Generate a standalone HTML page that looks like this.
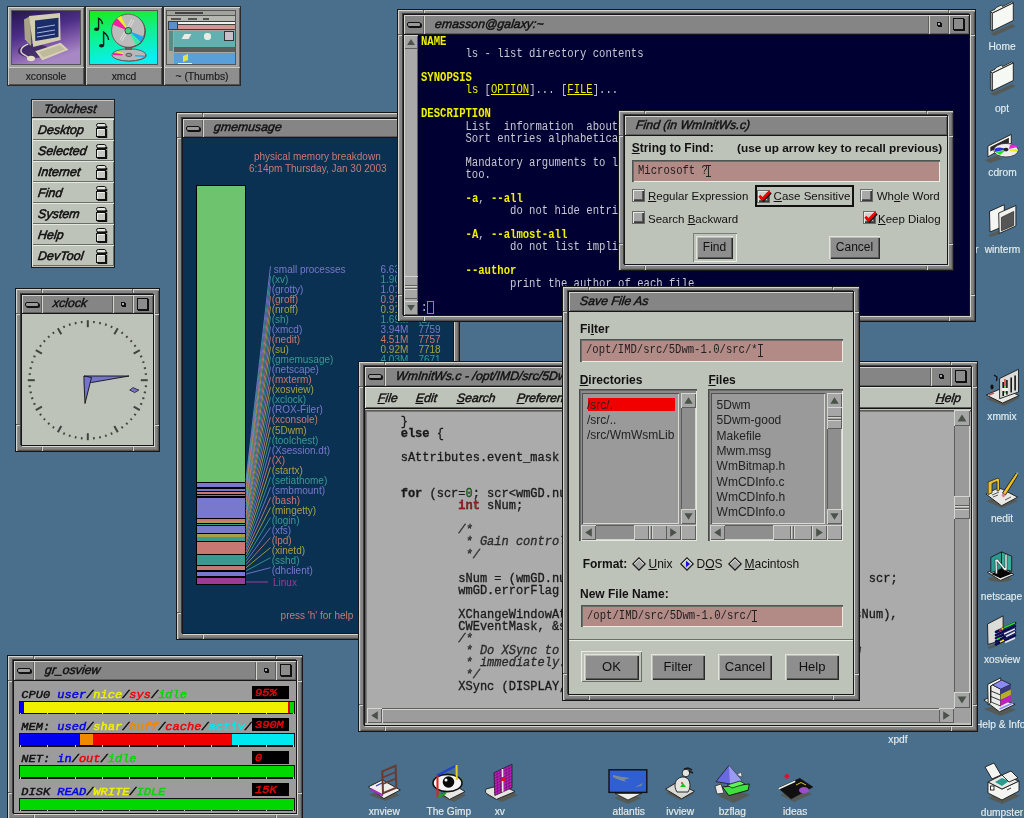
<!DOCTYPE html><html><head><meta charset="utf-8"><style>
*{box-sizing:border-box;margin:0;padding:0}
html,body{width:1024px;height:818px;overflow:hidden;background:#4a6f8c;font-family:"Liberation Sans",sans-serif;position:relative}
.a{position:absolute}
.win{position:absolute;background:#848484;border:1px solid #161616;box-shadow:inset 1px 1px 0 #d2d6ce,inset 2px 2px 0 #929292,inset -1px -1px 0 #505050,inset -2px -2px 0 #747474;}
.inn{position:absolute;border:1px solid #161616;box-shadow:1px 1px 0 #d2d6ce,-1px -1px 0 #3c3c3c;overflow:hidden}
.tb{position:absolute;left:0;top:0;right:0;height:19px;background:#858585;border-bottom:1px solid #161616}
.btn{position:absolute;top:0;bottom:0;width:20px;box-shadow:inset 1px 1px 0 #d2d6ce,inset -1px -1px 0 #5e5e5e}
.ttl{position:absolute;top:0;bottom:0;box-shadow:inset 1px 1px 0 #d2d6ce,inset -1px -1px 0 #5e5e5e;font:italic 12.3px/17px "Liberation Sans",sans-serif;-webkit-text-stroke:0.45px #111;color:#111;white-space:nowrap;overflow:hidden}
.cl{position:absolute;left:0;top:19px;right:0;bottom:0;overflow:hidden}
.mono{font-family:"Liberation Mono",monospace}
.pre{white-space:pre}
.rb{box-shadow:inset 1px 1px 0 #d2d6ce,inset -1px -1px 0 #5e5e5e}
.sk{box-shadow:inset 1px 1px 0 #5e5e5e,inset -1px -1px 0 #d2d6ce}
.lab{font:10.2px/12px "Liberation Sans",sans-serif;color:#e4ecec;text-align:center;white-space:nowrap;-webkit-text-stroke:0.15px #e4ecec}
</style></head><body><div class="a" style="left:0;top:0;width:1024px;height:818px;overflow:hidden;will-change:transform"><svg class="a" style="left:984px;top:0px" width="40" height="40"><polygon points="5.9,33.7 28.4,24 31.3,26.4 10.8,35.7" fill="#57574e" opacity="0.85"/><polygon points="6.4,11.5 8.3,13.2 8.3,30.8 6.4,29.5" fill="#d0d0c8" stroke="#1a1a1a" stroke-width="0.8"/><polygon points="6.4,11.5 11,9.2 12,7.6 17.5,5 18.5,6.6 27.9,1.8 29.3,2.9 8.3,13.2" fill="#e4e8e0" stroke="#1a1a1a" stroke-width="0.8"/><polygon points="8.3,13.2 29.3,2.9 29.3,20.5 8.3,30.8" fill="#f6f8f4" stroke="#1a1a1a" stroke-width="0.9"/></svg><div class="a lab" style="left:962px;top:41px;width:80px">Home</div><svg class="a" style="left:984px;top:60px" width="40" height="40"><polygon points="5.9,33.7 28.4,24 31.3,26.4 10.8,35.7" fill="#57574e" opacity="0.85"/><polygon points="6.4,11.5 8.3,13.2 8.3,30.8 6.4,29.5" fill="#d0d0c8" stroke="#1a1a1a" stroke-width="0.8"/><polygon points="6.4,11.5 11,9.2 12,7.6 17.5,5 18.5,6.6 27.9,1.8 29.3,2.9 8.3,13.2" fill="#e4e8e0" stroke="#1a1a1a" stroke-width="0.8"/><polygon points="8.3,13.2 29.3,2.9 29.3,20.5 8.3,30.8" fill="#f6f8f4" stroke="#1a1a1a" stroke-width="0.9"/></svg><div class="a lab" style="left:962px;top:103px;width:80px">opt</div><svg class="a" style="left:982px;top:128px" width="40" height="40"><polygon points="2.9,32.3 14.7,27.4 20,31 8,35" fill="#57574e" opacity="0.85"/><polygon points="5.9,18.1 29.3,6.4 29.3,15.2 5.9,28.9" fill="#f4f4f0" stroke="#1a1a1a" stroke-width="0.9"/><polygon points="8.3,19 26.9,9.8 26.9,15 8.3,23.5" fill="#2a2a2a"/><ellipse cx="24" cy="22.2" rx="12.2" ry="6.8" fill="#ecece8" stroke="#3a2a3a" stroke-width="0.8"/><path d="M12.5 21 Q18 18 24 21.5 L13 24 Z" fill="#3030e0"/><path d="M13.5 24 L24 22 L18 27 Z" fill="#20e020"/><path d="M28 17 Q33 15.5 35.5 19 L27 21 Z" fill="#f020e0"/><path d="M27 21.5 L36 21 L35 24 L28 23 Z" fill="#f0f020"/><ellipse cx="24" cy="21.6" rx="2.6" ry="1.8" fill="#222"/></svg><div class="a lab" style="left:962.5px;top:167px;width:80px">cdrom</div><svg class="a" style="left:982px;top:198px" width="40" height="42"><polygon points="6,37 16,33 18,36 8,39" fill="#57574e" opacity="0.85"/><polygon points="7.5,13.4 22.3,6.7 22.3,28 8,34" fill="#f4f6f2" stroke="#1a1a1a" stroke-width="0.9"/><polygon points="16.7,15 33.9,7.5 33.9,28 17.2,35.5" fill="#f0f0ec" stroke="#1a1a1a" stroke-width="0.9"/><polygon points="19.4,19.4 31.7,13.4 31.7,27.4 19.4,32.8" fill="#555555" stroke="#222" stroke-width="0.7"/></svg><div class="a lab" style="left:975px;top:244px;width:10px;text-align:left">r</div><div class="a lab" style="left:962.5px;top:244px;width:80px">winterm</div><svg class="a" style="left:980px;top:362px" width="44" height="46"><polygon points="6,37 24,44 40,36 22,30" fill="#57574e" opacity="0.85"/><polygon points="6.1,33 22.6,26 39.1,33.6 22.6,41" fill="#e8e8e4" stroke="#1a1a1a" stroke-width="0.9"/><path d="M9 33 L14 31" stroke="#c06060" stroke-width="1.6"/><polygon points="19.6,16.5 38.5,7.3 38.5,30 19.6,36.7" fill="#dcdcd8" stroke="#1a1a1a" stroke-width="0.9"/><path d="M23.2 20 V34 M26.9 18 V32.5 M31.2 15.5 V30.5 M35.1 13.5 V28.5" stroke="#151515" stroke-width="1.6"/><path d="M25 17 V24" stroke="#e01010" stroke-width="1.2"/><path d="M25 24 V31" stroke="#10c010" stroke-width="1.2"/><rect x="22" y="26" width="6" height="3" fill="#f0f0f0"/><path d="M14 13 L17 15 L16.5 19" stroke="#111" stroke-width="1.3" fill="none"/><ellipse cx="12" cy="25" rx="1.6" ry="2.4" fill="#111"/></svg><div class="a lab" style="left:962px;top:410.5px;width:80px">xmmix</div><svg class="a" style="left:980px;top:466px" width="44" height="44"><polygon points="6,35 22,42 38,35 22,29" fill="#57574e" opacity="0.85"/><polygon points="5.9,28 18,22 22,23 37.6,31.2 21.5,39.8" fill="#e8e8e4" stroke="#1a1a1a" stroke-width="0.9"/><path d="M12 29 L19 26 M13 31 L18 29 M25 34 L31 31" stroke="#333" stroke-width="0.8"/><path d="M8 16 L18 12 L19.5 13.5 L19.5 24 L17 25 L17 15.5 L12 17.5 L12 27 L8 28.5 Z" fill="#e8c030" stroke="#2a2a10" stroke-width="0.8"/><path d="M8 17 L8 28" stroke="#7a7020" stroke-width="1.5"/><polygon points="36,7 38,9 25.5,29 22.5,27" fill="#f0c020" stroke="#1a1a1a" stroke-width="0.9"/><polygon points="22.5,27 25.5,29 24,31.5 21.5,30" fill="#e08080"/><polygon points="36,7 38,9 37.5,6.5" fill="#d8d8a0"/></svg><div class="a lab" style="left:962px;top:513px;width:80px">nedit</div><svg class="a" style="left:980px;top:546px" width="40" height="40"><ellipse cx="20" cy="33" rx="12" ry="3" fill="#57574e" opacity="0.85"/><polygon points="7.5,26.3 21.5,20 33.9,28.5 20.4,34.4" fill="#e8e8e4" stroke="#1a1a1a" stroke-width="0.9"/><polygon points="10.8,11.3 21.5,5.9 21.5,22.6 10.8,26.9" fill="#2a9a90" stroke="#1a1a1a" stroke-width="0.9"/><polygon points="21.5,5.9 31.7,10.2 31.7,25.3 21.5,22.6" fill="#3aaa9a" stroke="#1a1a1a" stroke-width="0.9"/><polygon points="11.3,28 21.5,22.6 32.3,27.4 20.4,32.3" fill="#050505"/><path d="M15 13.5 L17.5 13 L25 22 L25 8.5 L27 8 L27 24 L24.5 24.5 L17 15.5 L17.5 27.5 L15.5 28 Z" fill="#f8f8f8" stroke="#111" stroke-width="0.5"/></svg><div class="a lab" style="left:961.5px;top:591px;width:80px">netscape</div><svg class="a" style="left:980px;top:610px" width="40" height="42"><polygon points="7,37 16,34 18,36 9,39" fill="#57574e" opacity="0.85"/><polygon points="7.5,14 23.1,5.9 23.1,30 8,34.4" fill="#dcdcd8" stroke="#1a1a1a" stroke-width="0.9"/><path d="M16 22.0 L35 13.0" stroke="#0a0a50" stroke-width="2.6" stroke-linecap="round"/><path d="M16 25.1 L35 16.1" stroke="#0a0a50" stroke-width="2.6" stroke-linecap="round"/><path d="M16 28.2 L35 19.2" stroke="#0a0a50" stroke-width="2.6" stroke-linecap="round"/><path d="M16 31.3 L35 22.3" stroke="#0a0a50" stroke-width="2.6" stroke-linecap="round"/><path d="M16 34.4 L35 25.4" stroke="#0a0a50" stroke-width="2.6" stroke-linecap="round"/><path d="M24 17.8 L35 12.8" stroke="#20e020" stroke-width="1.6"/><path d="M19 20.5 L21 19.5" stroke="#f02020" stroke-width="1.6"/><path d="M21.5 19.3 L23.5 18.3" stroke="#f0e020" stroke-width="1.6"/><path d="M24 24 L35 18.8" stroke="#e8e8e8" stroke-width="1.4"/><path d="M26 26.5 L35 22" stroke="#e8e8e8" stroke-width="1.4"/><path d="M17 29.5 L20 28" stroke="#20e020" stroke-width="1.6"/><path d="M20 32 L24 30" stroke="#f0e020" stroke-width="1.6"/><path d="M25 32.5 L35 28" stroke="#e8e8e8" stroke-width="1.4"/></svg><div class="a lab" style="left:962px;top:654px;width:80px">xosview</div><svg class="a" style="left:978px;top:672px" width="44" height="44"><polygon points="6,37 22,44 38,38 22,32" fill="#57574e" opacity="0.85"/><polygon points="5.9,28 14,24 37.1,32.3 21.5,39.8" fill="#eeeeea" stroke="#1a1a1a" stroke-width="0.9"/><path d="M21.5 37 L35 31" stroke="#8a8af0" stroke-width="1.5"/><polygon points="9.7,12.4 22.6,5.9 23,9 12.5,14 12.5,31 10.2,32.8" fill="#f4f4f0" stroke="#1a1a1a" stroke-width="0.9"/><polygon points="13,14 14.5,12.9 22.6,17.2 22.6,34 13,30" fill="#eaeaea" stroke="#1a1a1a" stroke-width="0.8"/><path d="M13 19 L22.6 23 M13 24.5 L22.6 28.5" stroke="#1a1a1a" stroke-width="0.9"/><polygon points="14.5,12.9 23.7,8 32.8,12.4 22.6,17.2" fill="#8a8af0" stroke="#1a1a1a" stroke-width="0.8"/><polygon points="22.6,17.2 32.8,12.4 32.8,17.5 22.6,22.5" fill="#3a3a80"/><polygon points="22.6,22.5 32.8,17.5 32.8,23 22.6,28" fill="#b8b020"/><polygon points="22.6,28 32.8,23 32.8,29 22.6,34" fill="#c020c0"/></svg><div class="a lab" style="left:975px;top:719px;width:60px;text-align:left">Help &amp; Info</div><svg class="a" style="left:980px;top:760px" width="44" height="46"><polygon points="8,38 22,44 40,36 26,30" fill="#57574e" opacity="0.85"/><polygon points="8,22 22,29 39,21 39,31 22,40 8,33" fill="#f4f4f0" stroke="#1a1a1a" stroke-width="0.9"/><polygon points="8,22 22,15 39,21 22,29" fill="#e8e8e4" stroke="#1a1a1a" stroke-width="0.9"/><polygon points="15,22 22,18 29,21 22,26" fill="#2a9a90"/><polygon points="5,7 14,3 21,15 12,19" fill="#f4f4f0" stroke="#1a1a1a" stroke-width="0.9"/><polygon points="22,15 31,11 38,18 29,22" fill="#f0f0ec" stroke="#1a1a1a" stroke-width="0.9"/><rect x="10.5" y="26" width="3.5" height="4" fill="#fff" stroke="#1a1a1a" stroke-width="0.9"/><path d="M27 30 L31 28" stroke="#1a1a1a" stroke-width="0.9"/></svg><div class="a lab" style="left:962px;top:807px;width:80px">dumpster</div><svg class="a" style="left:362px;top:758px" width="160" height="48"><polygon points="7,36.7 23,43 38,37 22,31" fill="#57574e" opacity="0.85"/><polygon points="6.25,28.9 20.3,21.9 38.3,32 21.9,40.6" fill="#eeeeea" stroke="#1a1a1a" stroke-width="0.9"/><path d="M8.5 31 L21 37.5" stroke="#a030c0" stroke-width="2.2"/><path d="M14 28 L20 25" stroke="#3030d0" stroke-width="1.2"/><polygon points="20.3,13.3 33.6,7.8 34.4,29.7 21,35.2" fill="none" stroke="#6a3a30" stroke-width="2"/><path d="M20.5 19.5 L34 14 M20.8 26 L34.2 20.5" stroke="#6a3a30" stroke-width="1.8"/><polygon points="78,38 92,44 104,37 90,31" fill="#57574e" opacity="0.85"/><polygon points="79.7,36 95.3,28.9 103,33.6 87.5,41.4" fill="#e8e8e4" stroke="#1a1a1a" stroke-width="0.9"/><ellipse cx="85.5" cy="25" rx="14.5" ry="8.6" fill="#f4f4f4" stroke="#111" stroke-width="1.6"/><circle cx="86.5" cy="24" r="5.8" fill="#0a0a0a"/><circle cx="84" cy="22" r="1.5" fill="#fff"/><path d="M75.5 18 L75.5 39.5" stroke="#e02020" stroke-width="2"/><path d="M75 17.5 L94.5 7.5" stroke="#2040d0" stroke-width="2"/><path d="M94.5 7 L94.8 22" stroke="#e0d020" stroke-width="2"/><path d="M76 39 L84 35" stroke="#20a020" stroke-width="2"/><polygon points="126,38 140,44 156,37 142,31" fill="#57574e" opacity="0.85"/><path d="M124 31 Q122 35 127 37 L134.4 41.4 L153 33.6 L140 27 Z" fill="#e4e4e0" stroke="#1a1a1a" stroke-width="0.9"/><polygon points="132,14.8 150,6.25 150,29.7 132.8,37.5" fill="#c020c0" stroke="#1a1a1a" stroke-width="0.8"/><path d="M135.0 13.4 L135.7 36.2" stroke="#5a105a" stroke-width="0.6"/><path d="M138.0 11.9 L138.5 34.9" stroke="#5a105a" stroke-width="0.6"/><path d="M141.0 10.5 L141.4 33.6" stroke="#5a105a" stroke-width="0.6"/><path d="M144.0 9.1 L144.3 32.3" stroke="#5a105a" stroke-width="0.6"/><path d="M147.0 7.7 L147.2 31.0" stroke="#5a105a" stroke-width="0.6"/><path d="M132 17.7 L150 9.2" stroke="#5a105a" stroke-width="0.6"/><path d="M132 20.5 L150 12.1" stroke="#5a105a" stroke-width="0.6"/><path d="M132 23.4 L150 15.0" stroke="#5a105a" stroke-width="0.6"/><path d="M132 26.2 L150 18.0" stroke="#5a105a" stroke-width="0.6"/><path d="M132 29.1 L150 20.9" stroke="#5a105a" stroke-width="0.6"/><path d="M132 31.9 L150 23.8" stroke="#5a105a" stroke-width="0.6"/><path d="M132 34.8 L150 26.8" stroke="#5a105a" stroke-width="0.6"/><path d="M140.5 11 L140.8 33.8" stroke="#e8e8e8" stroke-width="1.6"/><rect x="139" y="19" width="4" height="4" fill="#e01010"/></svg><div class="a lab" style="left:344.3px;top:806px;width:80px">xnview</div><div class="a lab" style="left:408.8px;top:806px;width:80px">The Gimp</div><div class="a lab" style="left:459.8px;top:806px;width:80px">xv</div><svg class="a" style="left:600px;top:758px" width="220" height="48"><polygon points="14,40 28,46 42,40 28,35" fill="#57574e" opacity="0.85"/><polygon points="15,35.4 41.9,35.4 28,42" fill="#eeeeea" stroke="#1a1a1a" stroke-width="0.8"/><rect x="9" y="11.8" width="37.8" height="22.6" fill="#2f5fd0" stroke="#111" stroke-width="1.4"/><path d="M13 17 Q20 19 30 20 L24 22 L27 24 Q18 22 13 19 Z" fill="#7a8a9a"/><path d="M35 29 L43 25 L41 28 Z" fill="#7a8a9a"/><polygon points="66,35 80,42 94,36 80,30" fill="#57574e" opacity="0.85"/><polygon points="65.5,31.1 76.3,24.7 94.5,33.3 81.6,40.8" fill="#d8d8d4" stroke="#1a1a1a" stroke-width="0.9"/><path d="M77 34 C73 28 75 20 82 19 C90 18 92 28 88 34 Z" fill="#e4e4e0" stroke="#1a1a1a" stroke-width="0.9"/><circle cx="85.9" cy="15" r="3.8" fill="#e4e4e0" stroke="#1a1a1a" stroke-width="0.9"/><path d="M84 11 L88 10 L92 12 M89 13 L93 15" stroke="#1a1a1a" stroke-width="1.4" fill="none"/><polygon points="80,29 83,25 86,29" fill="#20c020"/><circle cx="82" cy="25" r="0.9" fill="#e02020"/><polygon points="118,38 134,45 150,37 134,31" fill="#57574e" opacity="0.85"/><polygon points="115,28 121,26 124,35 117,36" fill="#e8e8e4" stroke="#1a1a1a" stroke-width="0.7"/><polygon points="116,23.6 128.9,7.5 141.8,22.6 130,26" fill="#6a6ae0" stroke="#1a1a1a" stroke-width="0.8"/><polygon points="128.9,7.5 141.8,22.6 130,26" fill="#9a9af0"/><polygon points="122.4,29 149.3,26 148.2,32.2 128.9,37.6" fill="#40e040" stroke="#111" stroke-width="0.9"/><polygon points="127,27 140,23 145,26 132,30" fill="#60f060" stroke="#111" stroke-width="0.7"/><polygon points="137,17 141,14 142,19" fill="#f0f0f0" stroke="#333" stroke-width="0.5"/><polygon points="180,37 194,44 212,36 198,30" fill="#57574e" opacity="0.85"/><circle cx="186.9" cy="18.3" r="2.4" fill="#e01030"/><polygon points="178.3,30 199.8,20.4 212.7,29 191.2,40.8" fill="#101010" stroke="#111" stroke-width="0.8"/><polygon points="178.3,30 195,22.5 195.5,24 179,31.5" fill="#f0f0ec"/><ellipse cx="204" cy="32.2" rx="5" ry="3.2" fill="#9a50c0"/><path d="M196 27 L201 24.5 L206 27" stroke="#d8c030" stroke-width="1" fill="none"/></svg><div class="a lab" style="left:588.7px;top:806px;width:80px">atlantis</div><div class="a lab" style="left:640.2px;top:806px;width:80px">ivview</div><div class="a lab" style="left:692.3px;top:806px;width:80px">bzflag</div><div class="a lab" style="left:755.2px;top:806px;width:80px">ideas</div><div class="a lab" style="left:878px;top:734px;width:40px">xpdf</div><div class="a" style="left:7px;top:6px;width:78px;height:80px;border:1px solid #2a2a2a;background:#a2a2a2;box-shadow:inset 1px 1px 0 #d2d6ce,inset -1px -1px 0 #606060"></div><div class="a" style="left:8px;top:67px;width:76px;height:18px;background:#8e8e8e;box-shadow:inset 1px 1px 0 #c8c8c0,inset -1px -1px 0 #505050;font:10.3px/19px 'Liberation Sans',sans-serif;color:#1a1a1a;-webkit-text-stroke:0.15px #1a1a1a;text-align:center">xconsole</div><div class="a" style="left:85px;top:6px;width:78px;height:80px;border:1px solid #2a2a2a;background:#a2a2a2;box-shadow:inset 1px 1px 0 #d2d6ce,inset -1px -1px 0 #606060"></div><div class="a" style="left:86px;top:67px;width:76px;height:18px;background:#8e8e8e;box-shadow:inset 1px 1px 0 #c8c8c0,inset -1px -1px 0 #505050;font:10.3px/19px 'Liberation Sans',sans-serif;color:#1a1a1a;-webkit-text-stroke:0.15px #1a1a1a;text-align:center">xmcd</div><div class="a" style="left:163px;top:6px;width:78px;height:80px;border:1px solid #2a2a2a;background:#a2a2a2;box-shadow:inset 1px 1px 0 #d2d6ce,inset -1px -1px 0 #606060"></div><div class="a" style="left:164px;top:67px;width:76px;height:18px;background:#8e8e8e;box-shadow:inset 1px 1px 0 #c8c8c0,inset -1px -1px 0 #505050;font:10.3px/19px 'Liberation Sans',sans-serif;color:#1a1a1a;-webkit-text-stroke:0.15px #1a1a1a;text-align:center">~ (Thumbs)</div><div class="a" style="left:11px;top:10px;width:70px;height:55px;border:1px solid #555;overflow:hidden;background:#3a2a6a">
<svg class="a" style="left:0;top:0" width="68" height="53" viewBox="0 0 68 53">
<defs><linearGradient id="xcbg" x1="0" y1="0" x2="0.4" y2="1"><stop offset="0" stop-color="#24164e"/><stop offset="0.45" stop-color="#4c2e86"/><stop offset="0.8" stop-color="#8a64b0"/><stop offset="1" stop-color="#a888c4"/></linearGradient></defs>
<rect x="0" y="0" width="68" height="53" fill="url(#xcbg)"/>
<ellipse cx="22" cy="40" rx="16" ry="7" fill="#2a1a50" opacity="0.7"/>
<polygon points="12,8.5 18.4,5 19.1,35.3 12.8,28.2" fill="#a8a488"/>
<polygon points="17,5 48,1.9 48.6,29 21.2,36" fill="#d4ceb0"/>
<polygon points="23,9.6 46.5,6.8 46.5,26.1 23.3,30" fill="#1c2c68"/>
<path d="M25 17 L43 14 M25 22 L43 19 M25 26 L43 23" stroke="#b8c8f0" stroke-width="1" opacity="0.9"/>
<polygon points="23.3,40.2 48.6,31.8 56.4,38.8 30.3,49.3" fill="#d8d2b4"/>
<polygon points="27,41 48,34 53,38.5 31,46.5" fill="#c0ba9c"/>
<path d="M16.3 33.2 C8 36 7 41 12 43.7 L16 46" stroke="#e0dac0" stroke-width="1.4" fill="none"/>
<ellipse cx="19" cy="47.5" rx="4" ry="2.8" fill="#e4dec4"/>
</svg></div><div class="a" style="left:89px;top:10px;width:69px;height:55px;border:1px solid #555;overflow:hidden">
<svg class="a" style="left:0;top:0" width="67" height="53" viewBox="0 0 67 53">
<defs><linearGradient id="mcbg" x1="0" y1="0" x2="0.2" y2="1"><stop offset="0" stop-color="#18ec18"/><stop offset="0.5" stop-color="#10f090"/><stop offset="1" stop-color="#08f0f0"/></linearGradient></defs>
<rect x="0" y="0" width="67" height="53" fill="url(#mcbg)"/>
<ellipse cx="39.5" cy="44.5" rx="17" ry="6.1" fill="#5a4a4a"/>
<ellipse cx="38.9" cy="43.9" rx="17" ry="6.1" fill="#b8b8b8" stroke="#5a4a4a" stroke-width="0.8"/>
<path d="M22.5 42 L33 43 L32 44.5 L23 44 Z" fill="#f020a0"/><path d="M27 40.5 L34 42 L33 43 L26 41.5 Z" fill="#f0f020"/>
<path d="M45 44 L55 44.5 L54 46 L45 45.5 Z" fill="#20b0f0"/>
<ellipse cx="38.9" cy="43.9" rx="3" ry="1.6" fill="#9a9a9a" stroke="#444" stroke-width="0.8"/>
<rect x="35" y="35" width="7" height="4" fill="#6a5a5a"/>
<circle cx="39.2" cy="20.5" r="16.6" fill="#5a4a4a"/>
<circle cx="38.2" cy="19.7" r="16.6" fill="#bcbcbc" stroke="#5a4a4a" stroke-width="0.8"/>
<path d="M38.2 19.7 L22.6 13.6 A16.6 16.6 0 0 1 27.2 7.2 Z" fill="#f020a0"/>
<path d="M38.2 19.7 L27.2 7.2 A16.6 16.6 0 0 1 31 5 Z" fill="#f0f020"/>
<path d="M38.2 19.7 L53.8 25.8 A16.6 16.6 0 0 1 50.5 31 Z" fill="#20a8f0"/>
<path d="M38.2 19.7 L50.5 31 A16.6 16.6 0 0 1 46 34 Z" fill="#30f0a0"/>
<path d="M32 30 L44 9 M30 29 L42 8" stroke="#e8e8e8" stroke-width="0.8"/>
<circle cx="38.2" cy="19.7" r="3.3" fill="#40d080" stroke="#444" stroke-width="1"/>
<path d="M8.6 18 L8.6 7.4 Q12 9 12.5 13.2" stroke="#181818" stroke-width="1.4" fill="none"/><ellipse cx="6.6" cy="18.3" rx="2.6" ry="1.8" fill="#181818"/>
<path d="M13.6 34.5 L13.6 21.1 Q18 24 18.7 29" stroke="#181818" stroke-width="1.4" fill="none"/><ellipse cx="11.5" cy="34.8" rx="2.6" ry="1.8" fill="#181818"/>
</svg></div><div class="a" style="left:166px;top:10px;width:70px;height:55px;border:1px solid #555;overflow:hidden;background:#a4a8a0">
<div class="a" style="left:0;top:0;width:68px;height:4px;background:#a0a49c"></div>
<div class="a" style="left:8px;top:1px;width:28px;height:2px;background:#444"></div>
<div class="a" style="left:0;top:4px;width:68px;height:1px;background:#555"></div>
<div class="a" style="left:0;top:5px;width:68px;height:5px;background:#b4b8b0"></div>
<div class="a" style="left:4px;top:7px;width:10px;height:2px;background:#555"></div><div class="a" style="left:21px;top:7px;width:9px;height:2px;background:#555"></div><div class="a" style="left:36px;top:7px;width:6px;height:2px;background:#555"></div>
<div class="a" style="left:1px;top:10px;width:67px;height:9px;background:#3a3e3a"></div>
<div class="a" style="left:2px;top:11px;width:8px;height:7px;background:#5a90c8"></div>
<div class="a" style="left:11px;top:11px;width:57px;height:2px;background:#f0f0f0"></div>
<div class="a" style="left:11px;top:14px;width:57px;height:4px;background:#d09890"></div>
<div class="a" style="left:2px;top:20px;width:4px;height:20px;background:#5a8a8a"></div>
<div class="a" style="left:7px;top:20px;width:61px;height:16px;background:#62b0b0"></div>
<div class="a" style="left:16px;top:23px;width:7px;height:5px;background:#e8ece4;transform:skewX(-30deg)"></div>
<div class="a" style="left:37px;top:22px;width:7px;height:7px;background:#e8ece4;border-radius:3px"></div>
<div class="a" style="left:57px;top:20px;width:10px;height:10px;background:#c8c0c8;border:1px solid #333"></div>
<div class="a" style="left:7px;top:36px;width:61px;height:5px;background:#5a5e5a"></div>
<div class="a" style="left:7px;top:42px;width:61px;height:12px;background:#5aa0d8"></div>
<div class="a" style="left:16px;top:44px;width:5px;height:6px;background:#e8e040;transform:skewY(-20deg)"></div>
<div class="a" style="left:11px;top:52px;width:14px;height:2px;background:#f0f0f0"></div>
</div><div class="a" style="left:31px;top:99px;width:84px;height:169px;background:#bec3b9;border:1px solid #1e1e1e"></div><div class="a" style="left:32px;top:100px;width:82px;height:18px;background:#8a8a8a;box-shadow:inset 1px 1px 0 #c8c8c0;border-bottom:1px solid #1e1e1e;font:italic 12.4px/18px 'Liberation Sans',sans-serif;-webkit-text-stroke:0.45px #111;color:#111;padding-left:12px"><span style="display:inline-block;transform:skewX(-7deg)">Toolchest</span></div><div class="a" style="left:32px;top:119px;width:82px;height:21px;background:#bec3b9;box-shadow:inset 1px 1px 0 #e4e8e0,inset -1px -1px 0 #6a6e68;font:italic 12.5px/23px 'Liberation Sans',sans-serif;-webkit-text-stroke:0.55px #111;color:#111;padding-left:6px"><span style="display:inline-block;transform:skewX(-7deg)">Desktop</span><svg class="a" style="left:64px;top:4px" width="13" height="15"><rect x="0.5" y="0.5" width="9.5" height="3.5" rx="1.8" fill="#e4e8e0" stroke="#111" stroke-width="1"/><path d="M1 4.5 H10.5 V3" stroke="#111" stroke-width="1.6" fill="none"/><rect x="0.5" y="5.5" width="9" height="8" fill="#c4c8c0" stroke="#111" stroke-width="1"/><path d="M10.5 6 V14.5 H1.5" stroke="#111" stroke-width="1.4" fill="none"/><path d="M1.5 6.5 H8.5 M1.5 6.5 V12.5" stroke="#eef2ea" stroke-width="1"/></svg></div><div class="a" style="left:32px;top:140px;width:82px;height:21px;background:#bec3b9;box-shadow:inset 1px 1px 0 #e4e8e0,inset -1px -1px 0 #6a6e68;font:italic 12.5px/23px 'Liberation Sans',sans-serif;-webkit-text-stroke:0.55px #111;color:#111;padding-left:6px"><span style="display:inline-block;transform:skewX(-7deg)">Selected</span><svg class="a" style="left:64px;top:4px" width="13" height="15"><rect x="0.5" y="0.5" width="9.5" height="3.5" rx="1.8" fill="#e4e8e0" stroke="#111" stroke-width="1"/><path d="M1 4.5 H10.5 V3" stroke="#111" stroke-width="1.6" fill="none"/><rect x="0.5" y="5.5" width="9" height="8" fill="#c4c8c0" stroke="#111" stroke-width="1"/><path d="M10.5 6 V14.5 H1.5" stroke="#111" stroke-width="1.4" fill="none"/><path d="M1.5 6.5 H8.5 M1.5 6.5 V12.5" stroke="#eef2ea" stroke-width="1"/></svg></div><div class="a" style="left:32px;top:161px;width:82px;height:21px;background:#bec3b9;box-shadow:inset 1px 1px 0 #e4e8e0,inset -1px -1px 0 #6a6e68;font:italic 12.5px/23px 'Liberation Sans',sans-serif;-webkit-text-stroke:0.55px #111;color:#111;padding-left:6px"><span style="display:inline-block;transform:skewX(-7deg)">Internet</span><svg class="a" style="left:64px;top:4px" width="13" height="15"><rect x="0.5" y="0.5" width="9.5" height="3.5" rx="1.8" fill="#e4e8e0" stroke="#111" stroke-width="1"/><path d="M1 4.5 H10.5 V3" stroke="#111" stroke-width="1.6" fill="none"/><rect x="0.5" y="5.5" width="9" height="8" fill="#c4c8c0" stroke="#111" stroke-width="1"/><path d="M10.5 6 V14.5 H1.5" stroke="#111" stroke-width="1.4" fill="none"/><path d="M1.5 6.5 H8.5 M1.5 6.5 V12.5" stroke="#eef2ea" stroke-width="1"/></svg></div><div class="a" style="left:32px;top:182px;width:82px;height:21px;background:#bec3b9;box-shadow:inset 1px 1px 0 #e4e8e0,inset -1px -1px 0 #6a6e68;font:italic 12.5px/23px 'Liberation Sans',sans-serif;-webkit-text-stroke:0.55px #111;color:#111;padding-left:6px"><span style="display:inline-block;transform:skewX(-7deg)">Find</span><svg class="a" style="left:64px;top:4px" width="13" height="15"><rect x="0.5" y="0.5" width="9.5" height="3.5" rx="1.8" fill="#e4e8e0" stroke="#111" stroke-width="1"/><path d="M1 4.5 H10.5 V3" stroke="#111" stroke-width="1.6" fill="none"/><rect x="0.5" y="5.5" width="9" height="8" fill="#c4c8c0" stroke="#111" stroke-width="1"/><path d="M10.5 6 V14.5 H1.5" stroke="#111" stroke-width="1.4" fill="none"/><path d="M1.5 6.5 H8.5 M1.5 6.5 V12.5" stroke="#eef2ea" stroke-width="1"/></svg></div><div class="a" style="left:32px;top:203px;width:82px;height:21px;background:#bec3b9;box-shadow:inset 1px 1px 0 #e4e8e0,inset -1px -1px 0 #6a6e68;font:italic 12.5px/23px 'Liberation Sans',sans-serif;-webkit-text-stroke:0.55px #111;color:#111;padding-left:6px"><span style="display:inline-block;transform:skewX(-7deg)">System</span><svg class="a" style="left:64px;top:4px" width="13" height="15"><rect x="0.5" y="0.5" width="9.5" height="3.5" rx="1.8" fill="#e4e8e0" stroke="#111" stroke-width="1"/><path d="M1 4.5 H10.5 V3" stroke="#111" stroke-width="1.6" fill="none"/><rect x="0.5" y="5.5" width="9" height="8" fill="#c4c8c0" stroke="#111" stroke-width="1"/><path d="M10.5 6 V14.5 H1.5" stroke="#111" stroke-width="1.4" fill="none"/><path d="M1.5 6.5 H8.5 M1.5 6.5 V12.5" stroke="#eef2ea" stroke-width="1"/></svg></div><div class="a" style="left:32px;top:224px;width:82px;height:21px;background:#bec3b9;box-shadow:inset 1px 1px 0 #e4e8e0,inset -1px -1px 0 #6a6e68;font:italic 12.5px/23px 'Liberation Sans',sans-serif;-webkit-text-stroke:0.55px #111;color:#111;padding-left:6px"><span style="display:inline-block;transform:skewX(-7deg)">Help</span><svg class="a" style="left:64px;top:4px" width="13" height="15"><rect x="0.5" y="0.5" width="9.5" height="3.5" rx="1.8" fill="#e4e8e0" stroke="#111" stroke-width="1"/><path d="M1 4.5 H10.5 V3" stroke="#111" stroke-width="1.6" fill="none"/><rect x="0.5" y="5.5" width="9" height="8" fill="#c4c8c0" stroke="#111" stroke-width="1"/><path d="M10.5 6 V14.5 H1.5" stroke="#111" stroke-width="1.4" fill="none"/><path d="M1.5 6.5 H8.5 M1.5 6.5 V12.5" stroke="#eef2ea" stroke-width="1"/></svg></div><div class="a" style="left:32px;top:245px;width:82px;height:21px;background:#bec3b9;box-shadow:inset 1px 1px 0 #e4e8e0,inset -1px -1px 0 #6a6e68;font:italic 12.5px/23px 'Liberation Sans',sans-serif;-webkit-text-stroke:0.55px #111;color:#111;padding-left:6px"><span style="display:inline-block;transform:skewX(-7deg)">DevTool</span><svg class="a" style="left:64px;top:4px" width="13" height="15"><rect x="0.5" y="0.5" width="9.5" height="3.5" rx="1.8" fill="#e4e8e0" stroke="#111" stroke-width="1"/><path d="M1 4.5 H10.5 V3" stroke="#111" stroke-width="1.6" fill="none"/><rect x="0.5" y="5.5" width="9" height="8" fill="#c4c8c0" stroke="#111" stroke-width="1"/><path d="M10.5 6 V14.5 H1.5" stroke="#111" stroke-width="1.4" fill="none"/><path d="M1.5 6.5 H8.5 M1.5 6.5 V12.5" stroke="#eef2ea" stroke-width="1"/></svg></div><div class="win" style="left:15px;top:288px;width:145px;height:164px"><div class="a" style="left:25px;top:0;width:1px;height:5px;background:#5e5e5e"></div><div class="a" style="left:26px;top:0;width:1px;height:5px;background:#d2d6ce"></div><div class="a" style="left:25px;top:157px;width:1px;height:5px;background:#5e5e5e"></div><div class="a" style="left:26px;top:157px;width:1px;height:5px;background:#d2d6ce"></div><div class="a" style="left:116px;top:0;width:1px;height:5px;background:#5e5e5e"></div><div class="a" style="left:117px;top:0;width:1px;height:5px;background:#d2d6ce"></div><div class="a" style="left:116px;top:157px;width:1px;height:5px;background:#5e5e5e"></div><div class="a" style="left:117px;top:157px;width:1px;height:5px;background:#d2d6ce"></div><div class="a" style="top:24px;left:0;height:1px;width:5px;background:#5e5e5e"></div><div class="a" style="top:25px;left:0;height:1px;width:5px;background:#d2d6ce"></div><div class="a" style="top:24px;left:138px;height:1px;width:5px;background:#5e5e5e"></div><div class="a" style="top:25px;left:138px;height:1px;width:5px;background:#d2d6ce"></div><div class="a" style="top:135px;left:0;height:1px;width:5px;background:#5e5e5e"></div><div class="a" style="top:136px;left:0;height:1px;width:5px;background:#d2d6ce"></div><div class="a" style="top:135px;left:138px;height:1px;width:5px;background:#5e5e5e"></div><div class="a" style="top:136px;left:138px;height:1px;width:5px;background:#d2d6ce"></div><div class="inn" style="left:5px;top:5px;width:133px;height:152px;background:#bec3b9"><div class="tb" style="height:19px"><div class="btn" style="left:0"><div class="a" style="left:3px;top:7px;width:14px;height:5px;border:1px solid #111;border-radius:2px;box-shadow:1px 1px 0 #111;background:#9a9a9a"></div></div><div class="ttl" style="left:20px;width:71px;padding-left:11px;line-height:17px"><span style="display:inline-block;transform:skewX(-7deg)">xclock</span></div><div class="btn" style="left:91px"><div class="a" style="left:8px;top:7px;width:4px;height:4px;border:1px solid #111;box-shadow:1px 1px 0 #111;background:#aaa"></div></div><div class="btn" style="left:111px"><div class="a" style="left:4px;top:3px;width:11px;height:12px;border:1px solid #111;box-shadow:1px 1px 0 #111;background:#8c8c8c"></div></div></div><div class="cl" style="top:19px"><svg class="a" style="left:0;top:0" width="131" height="132" viewBox="0 0 131 132"><line x1="65.8" y1="13.2" x2="65.8" y2="6.2" stroke="#404440" stroke-width="2.0"/><line x1="71.8" y1="9.2" x2="72.0" y2="7.0" stroke="#404440" stroke-width="1.7"/><line x1="77.7" y1="10.2" x2="78.2" y2="8.0" stroke="#404440" stroke-width="1.7"/><line x1="83.5" y1="11.7" x2="84.2" y2="9.6" stroke="#404440" stroke-width="1.7"/><line x1="89.1" y1="13.9" x2="90.0" y2="11.8" stroke="#404440" stroke-width="1.7"/><line x1="92.3" y1="20.3" x2="95.8" y2="14.2" stroke="#404440" stroke-width="2.0"/><line x1="99.5" y1="19.8" x2="100.8" y2="18.1" stroke="#404440" stroke-width="1.7"/><line x1="104.1" y1="23.6" x2="105.6" y2="22.0" stroke="#404440" stroke-width="1.7"/><line x1="108.4" y1="27.9" x2="110.0" y2="26.4" stroke="#404440" stroke-width="1.7"/><line x1="112.2" y1="32.5" x2="113.9" y2="31.2" stroke="#404440" stroke-width="1.7"/><line x1="111.7" y1="39.7" x2="117.8" y2="36.2" stroke="#404440" stroke-width="2.0"/><line x1="118.1" y1="42.9" x2="120.2" y2="42.0" stroke="#404440" stroke-width="1.7"/><line x1="120.3" y1="48.5" x2="122.4" y2="47.8" stroke="#404440" stroke-width="1.7"/><line x1="121.8" y1="54.3" x2="124.0" y2="53.8" stroke="#404440" stroke-width="1.7"/><line x1="122.8" y1="60.2" x2="125.0" y2="60.0" stroke="#404440" stroke-width="1.7"/><line x1="118.8" y1="66.2" x2="125.8" y2="66.2" stroke="#404440" stroke-width="2.0"/><line x1="122.8" y1="72.2" x2="125.0" y2="72.4" stroke="#404440" stroke-width="1.7"/><line x1="121.8" y1="78.1" x2="124.0" y2="78.6" stroke="#404440" stroke-width="1.7"/><line x1="120.3" y1="83.9" x2="122.4" y2="84.6" stroke="#404440" stroke-width="1.7"/><line x1="118.1" y1="89.5" x2="120.2" y2="90.4" stroke="#404440" stroke-width="1.7"/><line x1="111.7" y1="92.7" x2="117.8" y2="96.2" stroke="#404440" stroke-width="2.0"/><line x1="112.2" y1="99.9" x2="113.9" y2="101.2" stroke="#404440" stroke-width="1.7"/><line x1="108.4" y1="104.5" x2="110.0" y2="106.0" stroke="#404440" stroke-width="1.7"/><line x1="104.1" y1="108.8" x2="105.6" y2="110.4" stroke="#404440" stroke-width="1.7"/><line x1="99.5" y1="112.6" x2="100.8" y2="114.3" stroke="#404440" stroke-width="1.7"/><line x1="92.3" y1="112.1" x2="95.8" y2="118.2" stroke="#404440" stroke-width="2.0"/><line x1="89.1" y1="118.5" x2="90.0" y2="120.6" stroke="#404440" stroke-width="1.7"/><line x1="83.5" y1="120.7" x2="84.2" y2="122.8" stroke="#404440" stroke-width="1.7"/><line x1="77.7" y1="122.2" x2="78.2" y2="124.4" stroke="#404440" stroke-width="1.7"/><line x1="71.8" y1="123.2" x2="72.0" y2="125.4" stroke="#404440" stroke-width="1.7"/><line x1="65.8" y1="119.2" x2="65.8" y2="126.2" stroke="#404440" stroke-width="2.0"/><line x1="59.8" y1="123.2" x2="59.6" y2="125.4" stroke="#404440" stroke-width="1.7"/><line x1="53.9" y1="122.2" x2="53.4" y2="124.4" stroke="#404440" stroke-width="1.7"/><line x1="48.1" y1="120.7" x2="47.4" y2="122.8" stroke="#404440" stroke-width="1.7"/><line x1="42.5" y1="118.5" x2="41.6" y2="120.6" stroke="#404440" stroke-width="1.7"/><line x1="39.3" y1="112.1" x2="35.8" y2="118.2" stroke="#404440" stroke-width="2.0"/><line x1="32.1" y1="112.6" x2="30.8" y2="114.3" stroke="#404440" stroke-width="1.7"/><line x1="27.5" y1="108.8" x2="26.0" y2="110.4" stroke="#404440" stroke-width="1.7"/><line x1="23.2" y1="104.5" x2="21.6" y2="106.0" stroke="#404440" stroke-width="1.7"/><line x1="19.4" y1="99.9" x2="17.7" y2="101.2" stroke="#404440" stroke-width="1.7"/><line x1="19.9" y1="92.7" x2="13.8" y2="96.2" stroke="#404440" stroke-width="2.0"/><line x1="13.5" y1="89.5" x2="11.4" y2="90.4" stroke="#404440" stroke-width="1.7"/><line x1="11.3" y1="83.9" x2="9.2" y2="84.6" stroke="#404440" stroke-width="1.7"/><line x1="9.8" y1="78.1" x2="7.6" y2="78.6" stroke="#404440" stroke-width="1.7"/><line x1="8.8" y1="72.2" x2="6.6" y2="72.4" stroke="#404440" stroke-width="1.7"/><line x1="12.8" y1="66.2" x2="5.8" y2="66.2" stroke="#404440" stroke-width="2.0"/><line x1="8.8" y1="60.2" x2="6.6" y2="60.0" stroke="#404440" stroke-width="1.7"/><line x1="9.8" y1="54.3" x2="7.6" y2="53.8" stroke="#404440" stroke-width="1.7"/><line x1="11.3" y1="48.5" x2="9.2" y2="47.8" stroke="#404440" stroke-width="1.7"/><line x1="13.5" y1="42.9" x2="11.4" y2="42.0" stroke="#404440" stroke-width="1.7"/><line x1="19.9" y1="39.7" x2="13.8" y2="36.2" stroke="#404440" stroke-width="2.0"/><line x1="19.4" y1="32.5" x2="17.7" y2="31.2" stroke="#404440" stroke-width="1.7"/><line x1="23.2" y1="27.9" x2="21.6" y2="26.4" stroke="#404440" stroke-width="1.7"/><line x1="27.5" y1="23.6" x2="26.0" y2="22.0" stroke="#404440" stroke-width="1.7"/><line x1="32.1" y1="19.8" x2="30.8" y2="18.1" stroke="#404440" stroke-width="1.7"/><line x1="39.3" y1="20.3" x2="35.8" y2="14.2" stroke="#404440" stroke-width="2.0"/><line x1="42.5" y1="13.9" x2="41.6" y2="11.8" stroke="#404440" stroke-width="1.7"/><line x1="48.1" y1="11.7" x2="47.4" y2="9.6" stroke="#404440" stroke-width="1.7"/><line x1="53.9" y1="10.2" x2="53.4" y2="8.0" stroke="#404440" stroke-width="1.7"/><line x1="59.8" y1="9.2" x2="59.6" y2="7.0" stroke="#404440" stroke-width="1.7"/><polygon points="62,62 107,62 69.5,68.5 63.5,67" fill="#7474cc" stroke="#111" stroke-width="0.9"/><polygon points="62,62 69.5,63.5 63,89.5 62,68" fill="#7474cc" stroke="#111" stroke-width="0.9"/><polygon points="107.7,76.1 111,73.6 116.9,76.1 112.7,78.6" fill="#7474cc" stroke="#111" stroke-width="0.7"/></svg></div></div></div><div class="win" style="left:176px;top:112px;width:284px;height:528px"><div class="a" style="left:25px;top:0;width:1px;height:5px;background:#5e5e5e"></div><div class="a" style="left:26px;top:0;width:1px;height:5px;background:#d2d6ce"></div><div class="a" style="left:25px;top:521px;width:1px;height:5px;background:#5e5e5e"></div><div class="a" style="left:26px;top:521px;width:1px;height:5px;background:#d2d6ce"></div><div class="a" style="left:255px;top:0;width:1px;height:5px;background:#5e5e5e"></div><div class="a" style="left:256px;top:0;width:1px;height:5px;background:#d2d6ce"></div><div class="a" style="left:255px;top:521px;width:1px;height:5px;background:#5e5e5e"></div><div class="a" style="left:256px;top:521px;width:1px;height:5px;background:#d2d6ce"></div><div class="a" style="top:24px;left:0;height:1px;width:5px;background:#5e5e5e"></div><div class="a" style="top:25px;left:0;height:1px;width:5px;background:#d2d6ce"></div><div class="a" style="top:24px;left:277px;height:1px;width:5px;background:#5e5e5e"></div><div class="a" style="top:25px;left:277px;height:1px;width:5px;background:#d2d6ce"></div><div class="a" style="top:499px;left:0;height:1px;width:5px;background:#5e5e5e"></div><div class="a" style="top:500px;left:0;height:1px;width:5px;background:#d2d6ce"></div><div class="a" style="top:499px;left:277px;height:1px;width:5px;background:#5e5e5e"></div><div class="a" style="top:500px;left:277px;height:1px;width:5px;background:#d2d6ce"></div><div class="inn" style="left:5px;top:5px;width:272px;height:516px;background:#0a3152"><div class="tb" style="height:19px"><div class="btn" style="left:0"><div class="a" style="left:3px;top:7px;width:14px;height:5px;border:1px solid #111;border-radius:2px;box-shadow:1px 1px 0 #111;background:#9a9a9a"></div></div><div class="ttl" style="left:20px;width:210px;padding-left:11px;line-height:17px"><span style="display:inline-block;transform:skewX(-7deg)">gmemusage</span></div><div class="btn" style="left:230px"><div class="a" style="left:8px;top:7px;width:4px;height:4px;border:1px solid #111;box-shadow:1px 1px 0 #111;background:#aaa"></div></div><div class="btn" style="left:250px"><div class="a" style="left:4px;top:3px;width:11px;height:12px;border:1px solid #111;box-shadow:1px 1px 0 #111;background:#8c8c8c"></div></div></div><div class="cl" style="top:19px"><div class="a" style="left:71px;top:12px;font:10px/13px 'Liberation Sans',sans-serif;color:#c87a78;white-space:nowrap">physical memory breakdown</div><div class="a" style="left:66px;top:24px;font:10px/13px 'Liberation Sans',sans-serif;color:#c87a78;white-space:nowrap">6:14pm Thursday, Jan 30 2003</div><div class="a" style="left:13px;top:47px;width:50px;height:400px;background:#000"></div><div class="a" style="left:14px;top:48.0px;width:48px;height:296.0px;background:#6ec46e"></div><div class="a" style="left:14px;top:345.0px;width:48px;height:4.0px;background:#7878cc"></div><div class="a" style="left:14px;top:351.0px;width:48px;height:2.0px;background:#7878cc"></div><div class="a" style="left:14px;top:353.7px;width:48px;height:2.5px;background:#c87872"></div><div class="a" style="left:14px;top:357.0px;width:48px;height:1.4px;background:#3a9a92"></div><div class="a" style="left:14px;top:359.6px;width:48px;height:20.4px;background:#7878cc"></div><div class="a" style="left:14px;top:380.8px;width:48px;height:2.2px;background:#c87872"></div><div class="a" style="left:14px;top:383.3px;width:48px;height:1.7px;background:#a8a040"></div><div class="a" style="left:14px;top:385.8px;width:48px;height:1.2px;background:#3a9a92"></div><div class="a" style="left:14px;top:387.7px;width:48px;height:7.1px;background:#7878cc"></div><div class="a" style="left:14px;top:395.8px;width:48px;height:2.9px;background:#a8a040"></div><div class="a" style="left:14px;top:399.4px;width:48px;height:3.6px;background:#3a9a92"></div><div class="a" style="left:14px;top:403.8px;width:48px;height:12.5px;background:#c87872"></div><div class="a" style="left:14px;top:417.0px;width:48px;height:10.0px;background:#3a9a92"></div><div class="a" style="left:14px;top:428.0px;width:48px;height:4.0px;background:#c87872"></div><div class="a" style="left:14px;top:433.9px;width:48px;height:3.7px;background:#7878cc"></div><div class="a" style="left:14px;top:439.5px;width:48px;height:6.6px;background:#9a3c9a"></div><div class="a" style="left:90.8px;top:124.7px;font:10px/13px 'Liberation Sans',sans-serif;color:#7878cc;white-space:nowrap">small processes</div><div class="a" style="left:197.5px;top:124.7px;font:10px/13px 'Liberation Sans',sans-serif;color:#7878cc;white-space:nowrap">6.63M</div><div class="a" style="left:235.4px;top:124.7px;font:10px/13px 'Liberation Sans',sans-serif;color:#7878cc;white-space:nowrap"></div><div class="a" style="left:88.7px;top:134.8px;font:10px/13px 'Liberation Sans',sans-serif;color:#3a9a92;white-space:nowrap">(xv)</div><div class="a" style="left:197.5px;top:134.8px;font:10px/13px 'Liberation Sans',sans-serif;color:#3a9a92;white-space:nowrap">1.90M</div><div class="a" style="left:235.4px;top:134.8px;font:10px/13px 'Liberation Sans',sans-serif;color:#3a9a92;white-space:nowrap"></div><div class="a" style="left:88.7px;top:144.8px;font:10px/13px 'Liberation Sans',sans-serif;color:#7878cc;white-space:nowrap">(grotty)</div><div class="a" style="left:197.5px;top:144.8px;font:10px/13px 'Liberation Sans',sans-serif;color:#7878cc;white-space:nowrap">1.01M</div><div class="a" style="left:235.4px;top:144.8px;font:10px/13px 'Liberation Sans',sans-serif;color:#7878cc;white-space:nowrap"></div><div class="a" style="left:88.7px;top:154.8px;font:10px/13px 'Liberation Sans',sans-serif;color:#c87872;white-space:nowrap">(groff)</div><div class="a" style="left:197.5px;top:154.8px;font:10px/13px 'Liberation Sans',sans-serif;color:#c87872;white-space:nowrap">0.91M</div><div class="a" style="left:235.4px;top:154.8px;font:10px/13px 'Liberation Sans',sans-serif;color:#c87872;white-space:nowrap"></div><div class="a" style="left:88.7px;top:164.9px;font:10px/13px 'Liberation Sans',sans-serif;color:#a8a040;white-space:nowrap">(nroff)</div><div class="a" style="left:197.5px;top:164.9px;font:10px/13px 'Liberation Sans',sans-serif;color:#a8a040;white-space:nowrap">0.91M</div><div class="a" style="left:235.4px;top:164.9px;font:10px/13px 'Liberation Sans',sans-serif;color:#a8a040;white-space:nowrap"></div><div class="a" style="left:88.7px;top:174.9px;font:10px/13px 'Liberation Sans',sans-serif;color:#3a9a92;white-space:nowrap">(sh)</div><div class="a" style="left:197.5px;top:174.9px;font:10px/13px 'Liberation Sans',sans-serif;color:#3a9a92;white-space:nowrap">1.69M</div><div class="a" style="left:235.4px;top:174.9px;font:10px/13px 'Liberation Sans',sans-serif;color:#3a9a92;white-space:nowrap">(2)</div><div class="a" style="left:88.7px;top:185.0px;font:10px/13px 'Liberation Sans',sans-serif;color:#7878cc;white-space:nowrap">(xmcd)</div><div class="a" style="left:197.5px;top:185.0px;font:10px/13px 'Liberation Sans',sans-serif;color:#7878cc;white-space:nowrap">3.94M</div><div class="a" style="left:235.4px;top:185.0px;font:10px/13px 'Liberation Sans',sans-serif;color:#7878cc;white-space:nowrap">7759</div><div class="a" style="left:88.7px;top:195.1px;font:10px/13px 'Liberation Sans',sans-serif;color:#c87872;white-space:nowrap">(nedit)</div><div class="a" style="left:197.5px;top:195.1px;font:10px/13px 'Liberation Sans',sans-serif;color:#c87872;white-space:nowrap">4.51M</div><div class="a" style="left:235.4px;top:195.1px;font:10px/13px 'Liberation Sans',sans-serif;color:#c87872;white-space:nowrap">7757</div><div class="a" style="left:88.7px;top:205.1px;font:10px/13px 'Liberation Sans',sans-serif;color:#a8a040;white-space:nowrap">(su)</div><div class="a" style="left:197.5px;top:205.1px;font:10px/13px 'Liberation Sans',sans-serif;color:#a8a040;white-space:nowrap">0.92M</div><div class="a" style="left:235.4px;top:205.1px;font:10px/13px 'Liberation Sans',sans-serif;color:#a8a040;white-space:nowrap">7718</div><div class="a" style="left:88.7px;top:215.1px;font:10px/13px 'Liberation Sans',sans-serif;color:#3a9a92;white-space:nowrap">(gmemusage)</div><div class="a" style="left:197.5px;top:215.1px;font:10px/13px 'Liberation Sans',sans-serif;color:#3a9a92;white-space:nowrap">4.03M</div><div class="a" style="left:235.4px;top:215.1px;font:10px/13px 'Liberation Sans',sans-serif;color:#3a9a92;white-space:nowrap">7671</div><div class="a" style="left:88.7px;top:225.2px;font:10px/13px 'Liberation Sans',sans-serif;color:#7878cc;white-space:nowrap">(netscape)</div><div class="a" style="left:88.7px;top:235.2px;font:10px/13px 'Liberation Sans',sans-serif;color:#c87872;white-space:nowrap">(mxterm)</div><div class="a" style="left:88.7px;top:245.3px;font:10px/13px 'Liberation Sans',sans-serif;color:#a8a040;white-space:nowrap">(xosview)</div><div class="a" style="left:88.7px;top:255.4px;font:10px/13px 'Liberation Sans',sans-serif;color:#3a9a92;white-space:nowrap">(xclock)</div><div class="a" style="left:88.7px;top:265.4px;font:10px/13px 'Liberation Sans',sans-serif;color:#7878cc;white-space:nowrap">(ROX-Filer)</div><div class="a" style="left:88.7px;top:275.4px;font:10px/13px 'Liberation Sans',sans-serif;color:#c87872;white-space:nowrap">(xconsole)</div><div class="a" style="left:88.7px;top:285.5px;font:10px/13px 'Liberation Sans',sans-serif;color:#a8a040;white-space:nowrap">(5Dwm)</div><div class="a" style="left:88.7px;top:295.6px;font:10px/13px 'Liberation Sans',sans-serif;color:#3a9a92;white-space:nowrap">(toolchest)</div><div class="a" style="left:88.7px;top:305.6px;font:10px/13px 'Liberation Sans',sans-serif;color:#7878cc;white-space:nowrap">(Xsession.dt)</div><div class="a" style="left:88.7px;top:315.6px;font:10px/13px 'Liberation Sans',sans-serif;color:#c87872;white-space:nowrap">(X)</div><div class="a" style="left:88.7px;top:325.7px;font:10px/13px 'Liberation Sans',sans-serif;color:#a8a040;white-space:nowrap">(startx)</div><div class="a" style="left:88.7px;top:335.8px;font:10px/13px 'Liberation Sans',sans-serif;color:#3a9a92;white-space:nowrap">(setiathome)</div><div class="a" style="left:88.7px;top:345.8px;font:10px/13px 'Liberation Sans',sans-serif;color:#7878cc;white-space:nowrap">(smbmount)</div><div class="a" style="left:88.7px;top:355.9px;font:10px/13px 'Liberation Sans',sans-serif;color:#c87872;white-space:nowrap">(bash)</div><div class="a" style="left:88.7px;top:365.9px;font:10px/13px 'Liberation Sans',sans-serif;color:#a8a040;white-space:nowrap">(mingetty)</div><div class="a" style="left:88.7px;top:376.0px;font:10px/13px 'Liberation Sans',sans-serif;color:#3a9a92;white-space:nowrap">(login)</div><div class="a" style="left:88.7px;top:386.0px;font:10px/13px 'Liberation Sans',sans-serif;color:#7878cc;white-space:nowrap">(xfs)</div><div class="a" style="left:88.7px;top:396.1px;font:10px/13px 'Liberation Sans',sans-serif;color:#c87872;white-space:nowrap">(lpd)</div><div class="a" style="left:88.7px;top:406.1px;font:10px/13px 'Liberation Sans',sans-serif;color:#a8a040;white-space:nowrap">(xinetd)</div><div class="a" style="left:88.7px;top:416.2px;font:10px/13px 'Liberation Sans',sans-serif;color:#3a9a92;white-space:nowrap">(sshd)</div><div class="a" style="left:88.7px;top:426.2px;font:10px/13px 'Liberation Sans',sans-serif;color:#7878cc;white-space:nowrap">(dhclient)</div><svg class="a" style="left:0;top:0" width="270" height="500"><line x1="63" y1="342.0" x2="87.5" y2="128.2" stroke="#7878cc" stroke-width="0.9"/><line x1="63" y1="345.1" x2="87.5" y2="138.2" stroke="#3a9a92" stroke-width="0.9"/><line x1="63" y1="348.3" x2="87.5" y2="148.3" stroke="#7878cc" stroke-width="0.9"/><line x1="63" y1="351.4" x2="87.5" y2="158.3" stroke="#c87872" stroke-width="0.9"/><line x1="63" y1="354.5" x2="87.5" y2="168.4" stroke="#a8a040" stroke-width="0.9"/><line x1="63" y1="357.7" x2="87.5" y2="178.4" stroke="#3a9a92" stroke-width="0.9"/><line x1="63" y1="360.8" x2="87.5" y2="188.5" stroke="#7878cc" stroke-width="0.9"/><line x1="63" y1="363.9" x2="87.5" y2="198.6" stroke="#c87872" stroke-width="0.9"/><line x1="63" y1="367.1" x2="87.5" y2="208.6" stroke="#a8a040" stroke-width="0.9"/><line x1="63" y1="370.2" x2="87.5" y2="218.6" stroke="#3a9a92" stroke-width="0.9"/><line x1="63" y1="373.3" x2="87.5" y2="228.7" stroke="#7878cc" stroke-width="0.9"/><line x1="63" y1="376.5" x2="87.5" y2="238.8" stroke="#c87872" stroke-width="0.9"/><line x1="63" y1="379.6" x2="87.5" y2="248.8" stroke="#a8a040" stroke-width="0.9"/><line x1="63" y1="382.7" x2="87.5" y2="258.9" stroke="#3a9a92" stroke-width="0.9"/><line x1="63" y1="385.9" x2="87.5" y2="268.9" stroke="#7878cc" stroke-width="0.9"/><line x1="63" y1="389.0" x2="87.5" y2="278.9" stroke="#c87872" stroke-width="0.9"/><line x1="63" y1="392.1" x2="87.5" y2="289.0" stroke="#a8a040" stroke-width="0.9"/><line x1="63" y1="395.3" x2="87.5" y2="299.1" stroke="#3a9a92" stroke-width="0.9"/><line x1="63" y1="398.4" x2="87.5" y2="309.1" stroke="#7878cc" stroke-width="0.9"/><line x1="63" y1="401.5" x2="87.5" y2="319.1" stroke="#c87872" stroke-width="0.9"/><line x1="63" y1="404.7" x2="87.5" y2="329.2" stroke="#a8a040" stroke-width="0.9"/><line x1="63" y1="407.8" x2="87.5" y2="339.2" stroke="#3a9a92" stroke-width="0.9"/><line x1="63" y1="410.9" x2="87.5" y2="349.3" stroke="#7878cc" stroke-width="0.9"/><line x1="63" y1="414.1" x2="87.5" y2="359.4" stroke="#c87872" stroke-width="0.9"/><line x1="63" y1="417.2" x2="87.5" y2="369.4" stroke="#a8a040" stroke-width="0.9"/><line x1="63" y1="420.3" x2="87.5" y2="379.5" stroke="#3a9a92" stroke-width="0.9"/><line x1="63" y1="423.5" x2="87.5" y2="389.5" stroke="#7878cc" stroke-width="0.9"/><line x1="63" y1="426.6" x2="87.5" y2="399.6" stroke="#c87872" stroke-width="0.9"/><line x1="63" y1="429.7" x2="87.5" y2="409.6" stroke="#a8a040" stroke-width="0.9"/><line x1="63" y1="432.9" x2="87.5" y2="419.7" stroke="#3a9a92" stroke-width="0.9"/><line x1="63" y1="436.0" x2="87.5" y2="429.7" stroke="#7878cc" stroke-width="0.9"/><line x1="63" y1="444" x2="85" y2="444" stroke="#9a3c9a" stroke-width="1"/></svg><div class="a" style="left:90px;top:437.8px;font:10px/13px 'Liberation Sans',sans-serif;color:#9a3c9a;white-space:nowrap">Linux</div><div class="a" style="left:97.6px;top:471px;font:10px/13px 'Liberation Sans',sans-serif;color:#c87a78;white-space:nowrap">press 'h' for help</div></div></div></div><div class="win" style="left:397px;top:9px;width:579px;height:313px"><div class="a" style="left:25px;top:0;width:1px;height:5px;background:#5e5e5e"></div><div class="a" style="left:26px;top:0;width:1px;height:5px;background:#d2d6ce"></div><div class="a" style="left:25px;top:306px;width:1px;height:5px;background:#5e5e5e"></div><div class="a" style="left:26px;top:306px;width:1px;height:5px;background:#d2d6ce"></div><div class="a" style="left:550px;top:0;width:1px;height:5px;background:#5e5e5e"></div><div class="a" style="left:551px;top:0;width:1px;height:5px;background:#d2d6ce"></div><div class="a" style="left:550px;top:306px;width:1px;height:5px;background:#5e5e5e"></div><div class="a" style="left:551px;top:306px;width:1px;height:5px;background:#d2d6ce"></div><div class="a" style="top:24px;left:0;height:1px;width:5px;background:#5e5e5e"></div><div class="a" style="top:25px;left:0;height:1px;width:5px;background:#d2d6ce"></div><div class="a" style="top:24px;left:572px;height:1px;width:5px;background:#5e5e5e"></div><div class="a" style="top:25px;left:572px;height:1px;width:5px;background:#d2d6ce"></div><div class="a" style="top:284px;left:0;height:1px;width:5px;background:#5e5e5e"></div><div class="a" style="top:285px;left:0;height:1px;width:5px;background:#d2d6ce"></div><div class="a" style="top:284px;left:572px;height:1px;width:5px;background:#5e5e5e"></div><div class="a" style="top:285px;left:572px;height:1px;width:5px;background:#d2d6ce"></div><div class="inn" style="left:5px;top:4px;width:567px;height:302px;background:#000033"><div class="tb" style="height:20px"><div class="btn" style="left:0"><div class="a" style="left:3px;top:7px;width:14px;height:5px;border:1px solid #111;border-radius:2px;box-shadow:1px 1px 0 #111;background:#9a9a9a"></div></div><div class="ttl" style="left:20px;width:505px;padding-left:11px;line-height:19px"><span style="display:inline-block;transform:skewX(-7deg)">emasson@galaxy:~</span></div><div class="btn" style="left:525px"><div class="a" style="left:8px;top:7px;width:4px;height:4px;border:1px solid #111;box-shadow:1px 1px 0 #111;background:#aaa"></div></div><div class="btn" style="left:545px"><div class="a" style="left:4px;top:3px;width:11px;height:12px;border:1px solid #111;box-shadow:1px 1px 0 #111;background:#8c8c8c"></div></div></div><div class="cl" style="top:20px"><div class="a rb" style="left:0px;top:0px;width:14px;height:280px;background:#a9a9a9"></div><div class="a rb" style="left:0px;top:0px;width:14px;height:14px;background:#a6a6a6"><svg class="a" style="left:0;top:0" width="14" height="14"><polygon points="7.0,3.9200000000000004 10.92,10.08 3.08,10.08" fill="#4a524a"/></svg></div><div class="a rb" style="left:0px;top:266px;width:14px;height:14px;background:#a6a6a6"><svg class="a" style="left:0;top:0" width="14" height="14"><polygon points="3.08,3.9200000000000004 10.92,3.9200000000000004 7.0,10.08" fill="#4a524a"/></svg></div><div class="a rb" style="left:0px;top:241px;width:14px;height:23px;background:#a6a6a6"></div><div class="a" style="left:1px;top:250px;width:12px;height:1px;background:#5e5e5e"></div><div class="a" style="left:1px;top:251px;width:12px;height:1px;background:#d2d6ce"></div><div class="a" style="left:1px;top:253px;width:12px;height:1px;background:#5e5e5e"></div><div class="a" style="left:1px;top:254px;width:12px;height:1px;background:#d2d6ce"></div><div class="a mono pre" style="left:16.6px;top:-0.1px;font-size:12px;line-height:14px;color:#c8c8d4;transform:scaleX(0.883);transform-origin:0 0"><span style="color:#f0f000;font-weight:bold">NAME</span></div><div class="a mono pre" style="left:16.6px;top:12.0px;font-size:12px;line-height:14px;color:#c8c8d4;transform:scaleX(0.883);transform-origin:0 0">       ls - list directory contents</div><div class="a mono pre" style="left:16.6px;top:36.1px;font-size:12px;line-height:14px;color:#c8c8d4;transform:scaleX(0.883);transform-origin:0 0"><span style="color:#f0f000;font-weight:bold">SYNOPSIS</span></div><div class="a mono pre" style="left:16.6px;top:48.2px;font-size:12px;line-height:14px;color:#c8c8d4;transform:scaleX(0.883);transform-origin:0 0">       <span style="color:#f0f000;">ls</span> [<span style="color:#f0f000;text-decoration:underline">OPTION</span>]... [<span style="color:#f0f000;text-decoration:underline">FILE</span>]...</div><div class="a mono pre" style="left:16.6px;top:72.4px;font-size:12px;line-height:14px;color:#c8c8d4;transform:scaleX(0.883);transform-origin:0 0"><span style="color:#f0f000;font-weight:bold">DESCRIPTION</span></div><div class="a mono pre" style="left:16.6px;top:84.5px;font-size:12px;line-height:14px;color:#c8c8d4;transform:scaleX(0.883);transform-origin:0 0">       List  information  about  the FILEs (the current directory by default).</div><div class="a mono pre" style="left:16.6px;top:96.5px;font-size:12px;line-height:14px;color:#c8c8d4;transform:scaleX(0.883);transform-origin:0 0">       Sort entries alphabetically if none of -cftuSUX nor --sort.</div><div class="a mono pre" style="left:16.6px;top:120.7px;font-size:12px;line-height:14px;color:#c8c8d4;transform:scaleX(0.883);transform-origin:0 0">       Mandatory arguments to long options are mandatory for short options</div><div class="a mono pre" style="left:16.6px;top:132.8px;font-size:12px;line-height:14px;color:#c8c8d4;transform:scaleX(0.883);transform-origin:0 0">       too.</div><div class="a mono pre" style="left:16.6px;top:156.9px;font-size:12px;line-height:14px;color:#c8c8d4;transform:scaleX(0.883);transform-origin:0 0">       <span style="color:#f0f000;font-weight:bold">-a</span>, <span style="color:#f0f000;font-weight:bold">--all</span></div><div class="a mono pre" style="left:16.6px;top:169.0px;font-size:12px;line-height:14px;color:#c8c8d4;transform:scaleX(0.883);transform-origin:0 0">              do not hide entries starting with .</div><div class="a mono pre" style="left:16.6px;top:193.2px;font-size:12px;line-height:14px;color:#c8c8d4;transform:scaleX(0.883);transform-origin:0 0">       <span style="color:#f0f000;font-weight:bold">-A</span>, <span style="color:#f0f000;font-weight:bold">--almost-all</span></div><div class="a mono pre" style="left:16.6px;top:205.3px;font-size:12px;line-height:14px;color:#c8c8d4;transform:scaleX(0.883);transform-origin:0 0">              do not list implied . and ..</div><div class="a mono pre" style="left:16.6px;top:229.4px;font-size:12px;line-height:14px;color:#c8c8d4;transform:scaleX(0.883);transform-origin:0 0">       <span style="color:#f0f000;font-weight:bold">--author</span></div><div class="a mono pre" style="left:16.6px;top:241.5px;font-size:12px;line-height:14px;color:#c8c8d4;transform:scaleX(0.883);transform-origin:0 0">              print the author of each file</div><div class="a mono pre" style="left:16.6px;top:265.7px;font-size:12px;line-height:14px;color:#c8c8d4;transform:scaleX(0.883);transform-origin:0 0">:</div><div class="a" style="left:23px;top:266px;width:7px;height:13px;border:1px solid #10e010"></div></div></div></div><div class="win" style="left:618px;top:110px;width:336px;height:161px"><div class="a" style="left:25px;top:0;width:1px;height:5px;background:#5e5e5e"></div><div class="a" style="left:26px;top:0;width:1px;height:5px;background:#d2d6ce"></div><div class="a" style="left:25px;top:154px;width:1px;height:5px;background:#5e5e5e"></div><div class="a" style="left:26px;top:154px;width:1px;height:5px;background:#d2d6ce"></div><div class="a" style="left:307px;top:0;width:1px;height:5px;background:#5e5e5e"></div><div class="a" style="left:308px;top:0;width:1px;height:5px;background:#d2d6ce"></div><div class="a" style="left:307px;top:154px;width:1px;height:5px;background:#5e5e5e"></div><div class="a" style="left:308px;top:154px;width:1px;height:5px;background:#d2d6ce"></div><div class="a" style="top:24px;left:0;height:1px;width:5px;background:#5e5e5e"></div><div class="a" style="top:25px;left:0;height:1px;width:5px;background:#d2d6ce"></div><div class="a" style="top:24px;left:329px;height:1px;width:5px;background:#5e5e5e"></div><div class="a" style="top:25px;left:329px;height:1px;width:5px;background:#d2d6ce"></div><div class="a" style="top:132px;left:0;height:1px;width:5px;background:#5e5e5e"></div><div class="a" style="top:133px;left:0;height:1px;width:5px;background:#d2d6ce"></div><div class="a" style="top:132px;left:329px;height:1px;width:5px;background:#5e5e5e"></div><div class="a" style="top:133px;left:329px;height:1px;width:5px;background:#d2d6ce"></div><div class="inn" style="left:5px;top:4px;width:324px;height:150px;background:#bec3b9"><div class="tb" style="height:20px"><div class="ttl" style="left:0;width:322px;padding-left:11px;line-height:19px"><span style="display:inline-block;transform:skewX(-7deg)">Find (in WmInitWs.c)</span></div></div><div class="cl" style="top:20px"><div class="a pre" style="left:6.7000000000000455px;top:5.400000000000006px;font:12px/14px 'Liberation Sans',sans-serif;color:#111;font-weight:bold"><span style="text-decoration:underline">S</span>tring to Find:</div><div class="a pre" style="left:112px;top:5.400000000000006px;font:12px/14px 'Liberation Sans',sans-serif;color:#111;font-weight:bold;font-size:11.8px">(use up arrow key to recall previous)</div><div class="a" style="left:7px;top:24px;width:308px;height:22px;background:#b28a86;box-shadow:inset 1px 1px 0 #505450,inset 2px 2px 0 #6a6e6a,inset -1px -1px 0 #e8ece4;"></div><div class="a mono pre" style="left:13px;top:24px;height:22px;font-size:12px;line-height:22px;color:#222;transform:scaleX(0.883);transform-origin:0 0">Microsoft ?</div><div class="a" style="left:83px;top:29px;width:1px;height:12px;background:#222"></div><div class="a" style="left:81px;top:29px;width:5px;height:1px;background:#222"></div><div class="a" style="left:81px;top:40px;width:5px;height:1px;background:#222"></div><div class="a" style="left:7px;top:53px;width:13px;height:13px;background:#a8a8a8;border:1px solid #6a6a6a;box-shadow:inset 1px 1px 0 #e8ece4,inset -1px -1px 0 #3a3a3a,inset -2px -2px 0 #5a5a5a"></div><div class="a pre" style="left:23px;top:53px;font:12px/14px 'Liberation Sans',sans-serif;color:#111;font-size:11.5px"><span style="text-decoration:underline">R</span>egular Expression</div><div class="a" style="left:130px;top:49px;width:99px;height:22px;border:2px solid #111"></div><div class="a" style="left:132px;top:54px;width:13px;height:13px;background:#cfd3cb;border:1px solid #6a6a6a;box-shadow:inset 1px 1px 0 #e8ece4,inset -1px -1px 0 #3a3a3a,inset -2px -2px 0 #5a5a5a"></div><svg class="a" style="left:132px;top:54px" width="16" height="14"><path d="M2.8 6.5 L5.5 9.5 L13 1.8" stroke="#111" stroke-width="2.6" fill="none" transform="translate(0.8,0.8)"/><path d="M2.3 5.8 L5.5 9 L12.8 1.5" stroke="#f00000" stroke-width="2.8" fill="none"/></svg><div class="a pre" style="left:148.60000000000002px;top:53px;font:12px/14px 'Liberation Sans',sans-serif;color:#111;font-size:11.5px"><span style="text-decoration:underline">C</span>ase Sensitive</div><div class="a" style="left:235px;top:53px;width:13px;height:13px;background:#a8a8a8;border:1px solid #6a6a6a;box-shadow:inset 1px 1px 0 #e8ece4,inset -1px -1px 0 #3a3a3a,inset -2px -2px 0 #5a5a5a"></div><div class="a pre" style="left:251.70000000000005px;top:53px;font:12px/14px 'Liberation Sans',sans-serif;color:#111;font-size:11.5px">Wh<u>o</u>le Word</div><div class="a" style="left:7px;top:75px;width:13px;height:13px;background:#a8a8a8;border:1px solid #6a6a6a;box-shadow:inset 1px 1px 0 #e8ece4,inset -1px -1px 0 #3a3a3a,inset -2px -2px 0 #5a5a5a"></div><div class="a pre" style="left:23px;top:75.80000000000001px;font:12px/14px 'Liberation Sans',sans-serif;color:#111;font-size:11.5px">Search <u>B</u>ackward</div><div class="a" style="left:238px;top:75px;width:13px;height:13px;background:#cfd3cb;border:1px solid #6a6a6a;box-shadow:inset 1px 1px 0 #e8ece4,inset -1px -1px 0 #3a3a3a,inset -2px -2px 0 #5a5a5a"></div><svg class="a" style="left:238px;top:75px" width="16" height="14"><path d="M2.8 6.5 L5.5 9.5 L13 1.8" stroke="#111" stroke-width="2.6" fill="none" transform="translate(0.8,0.8)"/><path d="M2.3 5.8 L5.5 9 L12.8 1.5" stroke="#f00000" stroke-width="2.8" fill="none"/></svg><div class="a pre" style="left:253px;top:75.80000000000001px;font:12px/14px 'Liberation Sans',sans-serif;color:#111;font-size:11.5px"><span style="text-decoration:underline">K</span>eep Dialog</div><div class="a" style="left:68px;top:97px;width:44px;height:29px;box-shadow:inset 1px 1px 0 #7a7e78,inset -1px -1px 0 #e8ece4"></div><div class="a" style="left:71px;top:100px;width:37px;height:23px;background:#8e8e8e;box-shadow:inset 1px 1px 0 #e0e4dc,inset 2px 2px 0 #b8bcb4,inset -1px -1px 0 #2a2a2a,inset -2px -2px 0 #5a5a5a;font:12px/23px 'Liberation Sans',sans-serif;color:#111;text-align:center">Find</div><div class="a" style="left:204px;top:100px;width:51px;height:23px;background:#8e8e8e;box-shadow:inset 1px 1px 0 #e0e4dc,inset 2px 2px 0 #b8bcb4,inset -1px -1px 0 #2a2a2a,inset -2px -2px 0 #5a5a5a;font:12px/23px 'Liberation Sans',sans-serif;color:#111;text-align:center">Cancel</div></div></div></div><div class="win" style="left:358px;top:361px;width:620px;height:371px"><div class="a" style="left:25px;top:0;width:1px;height:5px;background:#5e5e5e"></div><div class="a" style="left:26px;top:0;width:1px;height:5px;background:#d2d6ce"></div><div class="a" style="left:25px;top:364px;width:1px;height:5px;background:#5e5e5e"></div><div class="a" style="left:26px;top:364px;width:1px;height:5px;background:#d2d6ce"></div><div class="a" style="left:591px;top:0;width:1px;height:5px;background:#5e5e5e"></div><div class="a" style="left:592px;top:0;width:1px;height:5px;background:#d2d6ce"></div><div class="a" style="left:591px;top:364px;width:1px;height:5px;background:#5e5e5e"></div><div class="a" style="left:592px;top:364px;width:1px;height:5px;background:#d2d6ce"></div><div class="a" style="top:24px;left:0;height:1px;width:5px;background:#5e5e5e"></div><div class="a" style="top:25px;left:0;height:1px;width:5px;background:#d2d6ce"></div><div class="a" style="top:24px;left:613px;height:1px;width:5px;background:#5e5e5e"></div><div class="a" style="top:25px;left:613px;height:1px;width:5px;background:#d2d6ce"></div><div class="a" style="top:342px;left:0;height:1px;width:5px;background:#5e5e5e"></div><div class="a" style="top:343px;left:0;height:1px;width:5px;background:#d2d6ce"></div><div class="a" style="top:342px;left:613px;height:1px;width:5px;background:#5e5e5e"></div><div class="a" style="top:343px;left:613px;height:1px;width:5px;background:#d2d6ce"></div><div class="inn" style="left:5px;top:4px;width:608px;height:360px;background:#bec3b9"><div class="tb" style="height:20px"><div class="btn" style="left:0"><div class="a" style="left:3px;top:7px;width:14px;height:5px;border:1px solid #111;border-radius:2px;box-shadow:1px 1px 0 #111;background:#9a9a9a"></div></div><div class="ttl" style="left:20px;width:546px;padding-left:11px;line-height:19px"><span style="display:inline-block;transform:skewX(-7deg)">WmInitWs.c - /opt/IMD/src/5Dwm-1.0/src/</span></div><div class="btn" style="left:566px"><div class="a" style="left:8px;top:7px;width:4px;height:4px;border:1px solid #111;box-shadow:1px 1px 0 #111;background:#aaa"></div></div><div class="btn" style="left:586px"><div class="a" style="left:4px;top:3px;width:11px;height:12px;border:1px solid #111;box-shadow:1px 1px 0 #111;background:#8c8c8c"></div></div></div><div class="cl" style="top:20px"><div class="a" style="left:0;top:0;width:611px;height:22px;background:#bec3b9;box-shadow:inset 1px 1px 0 #e4e8e0,inset -1px -1px 0 #5a5e58;border-bottom:1px solid #111"></div><div class="a pre" style="left:12.600000000000023px;top:3px;font:italic 12.2px/16px 'Liberation Sans',sans-serif;-webkit-text-stroke:0.45px #111;color:#111;transform:skewX(-7deg)"><span style="text-decoration:underline">F</span>ile</div><div class="a pre" style="left:51.19999999999999px;top:3px;font:italic 12.2px/16px 'Liberation Sans',sans-serif;-webkit-text-stroke:0.45px #111;color:#111;transform:skewX(-7deg)"><span style="text-decoration:underline">E</span>dit</div><div class="a pre" style="left:92.30000000000001px;top:3px;font:italic 12.2px/16px 'Liberation Sans',sans-serif;-webkit-text-stroke:0.45px #111;color:#111;transform:skewX(-7deg)"><span style="text-decoration:underline">S</span>earch</div><div class="a pre" style="left:151.5px;top:3px;font:italic 12.2px/16px 'Liberation Sans',sans-serif;-webkit-text-stroke:0.45px #111;color:#111;transform:skewX(-7deg)"><span style="text-decoration:underline">P</span>references</div><div class="a pre" style="left:570.7px;top:3px;font:italic 12.2px/16px 'Liberation Sans',sans-serif;-webkit-text-stroke:0.45px #111;color:#111;transform:skewX(-7deg)"><span style="text-decoration:underline">H</span>elp</div><div class="a" style="left:0;top:23px;width:611px;height:313px;background:#ababab;box-shadow:inset 1px 1px 0 #5a5a5a,inset 2px 2px 0 #7a7a7a"></div><div class="a mono pre" style="left:35.7px;top:27.9px;font-size:12px;line-height:14px;color:#1a1a1a;-webkit-text-stroke:0.3px #1a1a1a">}</div><div class="a mono pre" style="left:35.7px;top:39.9px;font-size:12px;line-height:14px;color:#1a1a1a;-webkit-text-stroke:0.3px #1a1a1a"><span style="font-weight:bold">else</span> {</div><div class="a mono pre" style="left:35.7px;top:64.0px;font-size:12px;line-height:14px;color:#1a1a1a;-webkit-text-stroke:0.3px #1a1a1a">sAttributes.event_mask = SubstructureRedirectMask;</div><div class="a mono pre" style="left:35.7px;top:100.2px;font-size:12px;line-height:14px;color:#1a1a1a;-webkit-text-stroke:0.3px #1a1a1a"><span style="font-weight:bold">for</span> (scr=<span style="color:#108010">0</span>; scr&lt;wmGD.numScreens; scr++) {</div><div class="a mono pre" style="left:35.7px;top:112.2px;font-size:12px;line-height:14px;color:#1a1a1a;-webkit-text-stroke:0.3px #1a1a1a">        <span style="color:#c01818;font-weight:bold">int</span> sNum;</div><div class="a mono pre" style="left:35.7px;top:136.4px;font-size:12px;line-height:14px;color:#1a1a1a;-webkit-text-stroke:0.3px #1a1a1a">        <span style="font-style:italic;color:#333">/*</span></div><div class="a mono pre" style="left:35.7px;top:148.4px;font-size:12px;line-height:14px;color:#1a1a1a;-webkit-text-stroke:0.3px #1a1a1a">        <span style="font-style:italic;color:#333"> * Gain control of the root windows of each screen</span></div><div class="a mono pre" style="left:35.7px;top:160.5px;font-size:12px;line-height:14px;color:#1a1a1a;-webkit-text-stroke:0.3px #1a1a1a">        <span style="font-style:italic;color:#333"> */</span></div><div class="a mono pre" style="left:35.7px;top:184.5px;font-size:12px;line-height:14px;color:#1a1a1a;-webkit-text-stroke:0.3px #1a1a1a">        sNum = (wmGD.numScreens == <span style="color:#108010">1</span>) ? DefaultScreen(DISPLAY) : scr;</div><div class="a mono pre" style="left:35.7px;top:196.6px;font-size:12px;line-height:14px;color:#1a1a1a;-webkit-text-stroke:0.3px #1a1a1a">        wmGD.errorFlag = False;</div><div class="a mono pre" style="left:35.7px;top:220.7px;font-size:12px;line-height:14px;color:#1a1a1a;-webkit-text-stroke:0.3px #1a1a1a">        XChangeWindowAttributes (DISPLAY, RootWindow (DISPLAY, sNum),</div><div class="a mono pre" style="left:35.7px;top:232.8px;font-size:12px;line-height:14px;color:#1a1a1a;-webkit-text-stroke:0.3px #1a1a1a">        CWEventMask, &amp;sAttributes);</div><div class="a mono pre" style="left:35.7px;top:244.8px;font-size:12px;line-height:14px;color:#1a1a1a;-webkit-text-stroke:0.3px #1a1a1a">        <span style="font-style:italic;color:#333">/*</span></div><div class="a mono pre" style="left:35.7px;top:256.9px;font-size:12px;line-height:14px;color:#1a1a1a;-webkit-text-stroke:0.3px #1a1a1a">        <span style="font-style:italic;color:#333"> * Do XSync to generate X error if another WM is running</span></div><div class="a mono pre" style="left:35.7px;top:268.9px;font-size:12px;line-height:14px;color:#1a1a1a;-webkit-text-stroke:0.3px #1a1a1a">        <span style="font-style:italic;color:#333"> * immediately.</span></div><div class="a mono pre" style="left:35.7px;top:281.0px;font-size:12px;line-height:14px;color:#1a1a1a;-webkit-text-stroke:0.3px #1a1a1a">        <span style="font-style:italic;color:#333"> */</span></div><div class="a mono pre" style="left:35.7px;top:293.0px;font-size:12px;line-height:14px;color:#1a1a1a;-webkit-text-stroke:0.3px #1a1a1a">        XSync (DISPLAY, False);</div><div class="a sk" style="left:589px;top:23px;width:16px;height:298px;background:#9a9a9a"></div><div class="a rb" style="left:589px;top:23px;width:16px;height:16px;background:#a6a6a6"><svg class="a" style="left:0;top:0" width="16" height="16"><polygon points="8.0,4.48 12.48,11.52 3.52,11.52" fill="#4a524a"/></svg></div><div class="a rb" style="left:589px;top:305px;width:16px;height:16px;background:#a6a6a6"><svg class="a" style="left:0;top:0" width="16" height="16"><polygon points="3.52,4.48 12.48,4.48 8.0,11.52" fill="#4a524a"/></svg></div><div class="a rb" style="left:589px;top:109px;width:16px;height:23px;background:#a6a6a6"></div><div class="a" style="left:590px;top:118px;width:14px;height:1px;background:#5e5e5e"></div><div class="a" style="left:590px;top:119px;width:14px;height:1px;background:#d2d6ce"></div><div class="a" style="left:590px;top:121px;width:14px;height:1px;background:#5e5e5e"></div><div class="a" style="left:590px;top:122px;width:14px;height:1px;background:#d2d6ce"></div><div class="a sk" style="left:2px;top:321px;width:587px;height:15px;background:#9a9a9a"></div><div class="a rb" style="left:2px;top:321px;width:15px;height:15px;background:#a6a6a6"><svg class="a" style="left:0;top:0" width="15" height="15"><polygon points="4.2,7.5 10.799999999999999,3.3 10.799999999999999,11.700000000000001" fill="#4a524a"/></svg></div><div class="a rb" style="left:574px;top:321px;width:15px;height:15px;background:#a6a6a6"><svg class="a" style="left:0;top:0" width="15" height="15"><polygon points="4.2,3.3 10.799999999999999,7.5 4.2,11.700000000000001" fill="#4a524a"/></svg></div><div class="a rb" style="left:17px;top:322px;width:558px;height:14px;background:#9c9c9c"></div><div class="a" style="left:589px;top:321px;width:16px;height:15px;background:#a0a0a0"></div></div></div></div><div class="win" style="left:562px;top:286px;width:298px;height:415px"><div class="a" style="left:25px;top:0;width:1px;height:5px;background:#5e5e5e"></div><div class="a" style="left:26px;top:0;width:1px;height:5px;background:#d2d6ce"></div><div class="a" style="left:25px;top:408px;width:1px;height:5px;background:#5e5e5e"></div><div class="a" style="left:26px;top:408px;width:1px;height:5px;background:#d2d6ce"></div><div class="a" style="left:269px;top:0;width:1px;height:5px;background:#5e5e5e"></div><div class="a" style="left:270px;top:0;width:1px;height:5px;background:#d2d6ce"></div><div class="a" style="left:269px;top:408px;width:1px;height:5px;background:#5e5e5e"></div><div class="a" style="left:270px;top:408px;width:1px;height:5px;background:#d2d6ce"></div><div class="a" style="top:24px;left:0;height:1px;width:5px;background:#5e5e5e"></div><div class="a" style="top:25px;left:0;height:1px;width:5px;background:#d2d6ce"></div><div class="a" style="top:24px;left:291px;height:1px;width:5px;background:#5e5e5e"></div><div class="a" style="top:25px;left:291px;height:1px;width:5px;background:#d2d6ce"></div><div class="a" style="top:386px;left:0;height:1px;width:5px;background:#5e5e5e"></div><div class="a" style="top:387px;left:0;height:1px;width:5px;background:#d2d6ce"></div><div class="a" style="top:386px;left:291px;height:1px;width:5px;background:#5e5e5e"></div><div class="a" style="top:387px;left:291px;height:1px;width:5px;background:#d2d6ce"></div><div class="inn" style="left:5px;top:4px;width:286px;height:404px;background:#bec3b9"><div class="tb" style="height:20px"><div class="ttl" style="left:0;width:284px;padding-left:11px;line-height:19px"><span style="display:inline-block;transform:skewX(-7deg)">Save File As</span></div></div><div class="cl" style="top:20px"><div class="a pre" style="left:11px;top:9.5px;font:12px/14px 'Liberation Sans',sans-serif;color:#111;font-weight:bold">Fi<u>l</u>ter</div><div class="a" style="left:11px;top:27px;width:263px;height:23px;background:#b28a86;box-shadow:inset 1px 1px 0 #505450,inset 2px 2px 0 #6a6e6a,inset -1px -1px 0 #e8ece4;"></div><div class="a mono pre" style="left:17px;top:27px;height:23px;font-size:12px;line-height:23px;color:#222;transform:scaleX(0.883);transform-origin:0 0">/opt/IMD/src/5Dwm-1.0/src/*</div><div class="a" style="left:191px;top:32px;width:1px;height:13px;background:#222"></div><div class="a" style="left:189px;top:32px;width:5px;height:1px;background:#222"></div><div class="a" style="left:189px;top:44px;width:5px;height:1px;background:#222"></div><div class="a pre" style="left:10.700000000000045px;top:61.39999999999998px;font:12px/14px 'Liberation Sans',sans-serif;color:#111;font-weight:bold"><span style="text-decoration:underline">D</span>irectories</div><div class="a pre" style="left:139.39999999999998px;top:61.39999999999998px;font:12px/14px 'Liberation Sans',sans-serif;color:#111;font-weight:bold"><span style="text-decoration:underline">F</span>iles</div><div class="a" style="left:10px;top:77px;width:118px;height:152px;background:#8a8a8a;box-shadow:inset 1px 1px 0 #4a4a4a,inset 2px 2px 0 #6a6a6a,inset -1px -1px 0 #e4e8e0"></div><div class="a" style="left:13px;top:81px;width:97px;height:131px;background:#9a9a9a;box-shadow:inset 1px 1px 0 #505050,inset -1px -1px 0 #d8dcd4"></div><div class="a" style="left:19px;top:86px;width:87px;height:13px;background:#f00000"></div><div class="a pre" style="left:18px;top:85.7px;font:12px/14px 'Liberation Sans',sans-serif;color:#222">/src/.</div><div class="a pre" style="left:18px;top:101.0px;font:12px/14px 'Liberation Sans',sans-serif;color:#222">/src/..</div><div class="a pre" style="left:18px;top:116.3px;font:12px/14px 'Liberation Sans',sans-serif;color:#222">/src/WmWsmLib</div><div class="a sk" style="left:112px;top:81px;width:15px;height:131px;background:#8e8e8e"></div><div class="a rb" style="left:112px;top:81px;width:15px;height:15px;background:#a6a6a6"><svg class="a" style="left:0;top:0" width="15" height="15"><polygon points="7.5,4.2 11.700000000000001,10.799999999999999 3.3,10.799999999999999" fill="#4a524a"/></svg></div><div class="a rb" style="left:112px;top:197px;width:15px;height:15px;background:#a6a6a6"><svg class="a" style="left:0;top:0" width="15" height="15"><polygon points="3.3,4.2 11.700000000000001,4.2 7.5,10.799999999999999" fill="#4a524a"/></svg></div><div class="a sk" style="left:12px;top:213px;width:100px;height:15px;background:#8e8e8e"></div><div class="a rb" style="left:12px;top:213px;width:15px;height:15px;background:#a6a6a6"><svg class="a" style="left:0;top:0" width="15" height="15"><polygon points="4.2,7.5 10.799999999999999,3.3 10.799999999999999,11.700000000000001" fill="#4a524a"/></svg></div><div class="a rb" style="left:97px;top:213px;width:15px;height:15px;background:#a6a6a6"><svg class="a" style="left:0;top:0" width="15" height="15"><polygon points="4.2,3.3 10.799999999999999,7.5 4.2,11.700000000000001" fill="#4a524a"/></svg></div><div class="a rb" style="left:65px;top:213px;width:33px;height:15px;background:#a6a6a6"></div><div class="a" style="top:214px;left:79px;height:13px;width:1px;background:#5e5e5e"></div><div class="a" style="top:214px;left:80px;height:13px;width:1px;background:#d2d6ce"></div><div class="a" style="top:214px;left:82px;height:13px;width:1px;background:#5e5e5e"></div><div class="a" style="top:214px;left:83px;height:13px;width:1px;background:#d2d6ce"></div><div class="a rb" style="left:112px;top:213px;width:15px;height:15px;background:#a8a8a8"></div><div class="a" style="left:139px;top:77px;width:135px;height:152px;background:#8a8a8a;box-shadow:inset 1px 1px 0 #4a4a4a,inset 2px 2px 0 #6a6a6a,inset -1px -1px 0 #e4e8e0"></div><div class="a" style="left:142px;top:81px;width:114px;height:131px;background:#9a9a9a;box-shadow:inset 1px 1px 0 #505050,inset -1px -1px 0 #d8dcd4"></div><div class="a pre" style="left:147.60000000000002px;top:86.0px;font:12px/14px 'Liberation Sans',sans-serif;color:#222">5Dwm</div><div class="a pre" style="left:147.60000000000002px;top:101.3px;font:12px/14px 'Liberation Sans',sans-serif;color:#222">5Dwm-good</div><div class="a pre" style="left:147.60000000000002px;top:116.6px;font:12px/14px 'Liberation Sans',sans-serif;color:#222">Makefile</div><div class="a pre" style="left:147.60000000000002px;top:131.9px;font:12px/14px 'Liberation Sans',sans-serif;color:#222">Mwm.msg</div><div class="a pre" style="left:147.60000000000002px;top:147.2px;font:12px/14px 'Liberation Sans',sans-serif;color:#222">WmBitmap.h</div><div class="a pre" style="left:147.60000000000002px;top:162.5px;font:12px/14px 'Liberation Sans',sans-serif;color:#222">WmCDInfo.c</div><div class="a pre" style="left:147.60000000000002px;top:177.8px;font:12px/14px 'Liberation Sans',sans-serif;color:#222">WmCDInfo.h</div><div class="a pre" style="left:147.60000000000002px;top:193.1px;font:12px/14px 'Liberation Sans',sans-serif;color:#222">WmCDInfo.o</div><div class="a sk" style="left:258px;top:81px;width:15px;height:131px;background:#8e8e8e"></div><div class="a rb" style="left:258px;top:81px;width:15px;height:15px;background:#a6a6a6"><svg class="a" style="left:0;top:0" width="15" height="15"><polygon points="7.5,4.2 11.700000000000001,10.799999999999999 3.3,10.799999999999999" fill="#4a524a"/></svg></div><div class="a rb" style="left:258px;top:197px;width:15px;height:15px;background:#a6a6a6"><svg class="a" style="left:0;top:0" width="15" height="15"><polygon points="3.3,4.2 11.700000000000001,4.2 7.5,10.799999999999999" fill="#4a524a"/></svg></div><div class="a rb" style="left:258px;top:95px;width:15px;height:22px;background:#a6a6a6"></div><div class="a" style="left:259px;top:104px;width:13px;height:1px;background:#5e5e5e"></div><div class="a" style="left:259px;top:105px;width:13px;height:1px;background:#d2d6ce"></div><div class="a" style="left:259px;top:107px;width:13px;height:1px;background:#5e5e5e"></div><div class="a" style="left:259px;top:108px;width:13px;height:1px;background:#d2d6ce"></div><div class="a sk" style="left:141px;top:213px;width:117px;height:15px;background:#8e8e8e"></div><div class="a rb" style="left:141px;top:213px;width:15px;height:15px;background:#a6a6a6"><svg class="a" style="left:0;top:0" width="15" height="15"><polygon points="4.2,7.5 10.799999999999999,3.3 10.799999999999999,11.700000000000001" fill="#4a524a"/></svg></div><div class="a rb" style="left:243px;top:213px;width:15px;height:15px;background:#a6a6a6"><svg class="a" style="left:0;top:0" width="15" height="15"><polygon points="4.2,3.3 10.799999999999999,7.5 4.2,11.700000000000001" fill="#4a524a"/></svg></div><div class="a rb" style="left:204px;top:213px;width:39px;height:15px;background:#a6a6a6"></div><div class="a" style="top:214px;left:221px;height:13px;width:1px;background:#5e5e5e"></div><div class="a" style="top:214px;left:222px;height:13px;width:1px;background:#d2d6ce"></div><div class="a" style="top:214px;left:224px;height:13px;width:1px;background:#5e5e5e"></div><div class="a" style="top:214px;left:225px;height:13px;width:1px;background:#d2d6ce"></div><div class="a rb" style="left:258px;top:213px;width:15px;height:15px;background:#a8a8a8"></div><div class="a pre" style="left:13.700000000000045px;top:245px;font:12px/14px 'Liberation Sans',sans-serif;color:#111;font-weight:bold">Format:</div><svg class="a" style="left:63px;top:245px" width="15" height="15"><polygon points="7,0.8 13.2,7 7,13.2 0.8,7" fill="#a8a8a8" stroke="#1a1a1a" stroke-width="1.2"/><polyline points="2.3,7 7,2.3 11.7,7" fill="none" stroke="#eef2ea" stroke-width="1"/></svg><div class="a pre" style="left:79.5px;top:245px;font:12px/14px 'Liberation Sans',sans-serif;color:#111;font-size:12px"><span style="text-decoration:underline">U</span>nix</div><svg class="a" style="left:111px;top:245px" width="15" height="15"><polygon points="7,0.8 13.2,7 7,13.2 0.8,7" fill="#c8ccc4" stroke="#1a1a1a" stroke-width="1.2"/><polyline points="2.3,7 7,2.3 11.7,7" fill="none" stroke="#eef2ea" stroke-width="1"/><polygon points="6,3.8 10,7 6,10.2" fill="#1010f0"/></svg><div class="a pre" style="left:127.5px;top:245px;font:12px/14px 'Liberation Sans',sans-serif;color:#111;font-size:12px">D<u>O</u>S</div><svg class="a" style="left:159px;top:245px" width="15" height="15"><polygon points="7,0.8 13.2,7 7,13.2 0.8,7" fill="#a8a8a8" stroke="#1a1a1a" stroke-width="1.2"/><polyline points="2.3,7 7,2.3 11.7,7" fill="none" stroke="#eef2ea" stroke-width="1"/></svg><div class="a pre" style="left:175.5px;top:245px;font:12px/14px 'Liberation Sans',sans-serif;color:#111;font-size:12px"><span style="text-decoration:underline">M</span>acintosh</div><div class="a pre" style="left:11px;top:274.5px;font:12px/14px 'Liberation Sans',sans-serif;color:#111;font-weight:bold">New File Name:</div><div class="a" style="left:12px;top:293px;width:262px;height:22px;background:#b28a86;box-shadow:inset 1px 1px 0 #505450,inset 2px 2px 0 #6a6e6a,inset -1px -1px 0 #e8ece4;"></div><div class="a mono pre" style="left:18px;top:293px;height:22px;font-size:12px;line-height:22px;color:#222;transform:scaleX(0.883);transform-origin:0 0">/opt/IMD/src/5Dwm-1.0/src/</div><div class="a" style="left:185px;top:298px;width:1px;height:12px;background:#222"></div><div class="a" style="left:183px;top:298px;width:5px;height:1px;background:#222"></div><div class="a" style="left:183px;top:309px;width:5px;height:1px;background:#222"></div><div class="a" style="left:0;top:327px;width:284px;height:1px;background:#6a6e68"></div><div class="a" style="left:0;top:328px;width:284px;height:1px;background:#e8ece4"></div><div class="a" style="left:12px;top:339px;width:61px;height:31px;box-shadow:inset 1px 1px 0 #e8ece4,inset -1px -1px 0 #6a6e68"></div><div class="a" style="left:15px;top:342px;width:55px;height:26px;background:#8e8e8e;box-shadow:inset 1px 1px 0 #e0e4dc,inset 2px 2px 0 #b8bcb4,inset -1px -1px 0 #2a2a2a,inset -2px -2px 0 #5a5a5a;font:13px/26px 'Liberation Sans',sans-serif;color:#111;text-align:center">OK</div><div class="a" style="left:82px;top:342px;width:54px;height:26px;background:#8e8e8e;box-shadow:inset 1px 1px 0 #e0e4dc,inset 2px 2px 0 #b8bcb4,inset -1px -1px 0 #2a2a2a,inset -2px -2px 0 #5a5a5a;font:13px/26px 'Liberation Sans',sans-serif;color:#111;text-align:center">Filter</div><div class="a" style="left:149px;top:342px;width:54px;height:26px;background:#8e8e8e;box-shadow:inset 1px 1px 0 #e0e4dc,inset 2px 2px 0 #b8bcb4,inset -1px -1px 0 #2a2a2a,inset -2px -2px 0 #5a5a5a;font:13px/26px 'Liberation Sans',sans-serif;color:#111;text-align:center">Cancel</div><div class="a" style="left:216px;top:342px;width:54px;height:26px;background:#8e8e8e;box-shadow:inset 1px 1px 0 #e0e4dc,inset 2px 2px 0 #b8bcb4,inset -1px -1px 0 #2a2a2a,inset -2px -2px 0 #5a5a5a;font:13px/26px 'Liberation Sans',sans-serif;color:#111;text-align:center">Help</div></div></div></div><div class="win" style="left:7px;top:655px;width:296px;height:165px"><div class="a" style="left:25px;top:0;width:1px;height:5px;background:#5e5e5e"></div><div class="a" style="left:26px;top:0;width:1px;height:5px;background:#d2d6ce"></div><div class="a" style="left:25px;top:158px;width:1px;height:5px;background:#5e5e5e"></div><div class="a" style="left:26px;top:158px;width:1px;height:5px;background:#d2d6ce"></div><div class="a" style="left:267px;top:0;width:1px;height:5px;background:#5e5e5e"></div><div class="a" style="left:268px;top:0;width:1px;height:5px;background:#d2d6ce"></div><div class="a" style="left:267px;top:158px;width:1px;height:5px;background:#5e5e5e"></div><div class="a" style="left:268px;top:158px;width:1px;height:5px;background:#d2d6ce"></div><div class="a" style="top:24px;left:0;height:1px;width:5px;background:#5e5e5e"></div><div class="a" style="top:25px;left:0;height:1px;width:5px;background:#d2d6ce"></div><div class="a" style="top:24px;left:289px;height:1px;width:5px;background:#5e5e5e"></div><div class="a" style="top:25px;left:289px;height:1px;width:5px;background:#d2d6ce"></div><div class="a" style="top:136px;left:0;height:1px;width:5px;background:#5e5e5e"></div><div class="a" style="top:137px;left:0;height:1px;width:5px;background:#d2d6ce"></div><div class="a" style="top:136px;left:289px;height:1px;width:5px;background:#5e5e5e"></div><div class="a" style="top:137px;left:289px;height:1px;width:5px;background:#d2d6ce"></div><div class="inn" style="left:5px;top:4px;width:284px;height:154px;background:#9c9c9c"><div class="tb" style="height:20px"><div class="btn" style="left:0"><div class="a" style="left:3px;top:7px;width:14px;height:5px;border:1px solid #111;border-radius:2px;box-shadow:1px 1px 0 #111;background:#9a9a9a"></div></div><div class="ttl" style="left:20px;width:222px;padding-left:11px;line-height:19px"><span style="display:inline-block;transform:skewX(-7deg)">gr_osview</span></div><div class="btn" style="left:242px"><div class="a" style="left:8px;top:7px;width:4px;height:4px;border:1px solid #111;box-shadow:1px 1px 0 #111;background:#aaa"></div></div><div class="btn" style="left:262px"><div class="a" style="left:4px;top:3px;width:11px;height:12px;border:1px solid #111;box-shadow:1px 1px 0 #111;background:#8c8c8c"></div></div></div><div class="cl" style="top:20px"><div class="a" style="left:0;top:0;width:290px;height:140px;background:#9c9c9c"></div><div class="a mono pre" style="left:7.3px;top:6.5px;font:italic 12px/14px 'Liberation Mono',monospace;transform:scaleY(0.9);transform-origin:0 100%"><span style="color:#111;-webkit-text-stroke:0.5px #111">CPU0 </span><span style="color:#0000f0;-webkit-text-stroke:0.5px #0000f0">user</span><span style="color:#111;-webkit-text-stroke:0.5px #111">/</span><span style="color:#f0f000;-webkit-text-stroke:0.5px #f0f000">nice</span><span style="color:#111;-webkit-text-stroke:0.5px #111">/</span><span style="color:#f00000;-webkit-text-stroke:0.5px #f00000">sys</span><span style="color:#111;-webkit-text-stroke:0.5px #111">/</span><span style="color:#00d800;-webkit-text-stroke:0.5px #00d800">idle</span></div><div class="a" style="left:238px;top:5.0px;width:37px;height:13px;background:#000"></div><div class="a mono pre" style="left:241px;top:5.0px;font:italic 12px/14px 'Liberation Mono',monospace;transform:scaleY(0.9);transform-origin:0 100%"><span style="color:#f00000;-webkit-text-stroke:0.5px #f00000">95%</span></div><div class="a" style="left:5px;top:19.6px;width:276px;height:13.5px;background:#111"></div><div class="a" style="left:6.0px;top:20.6px;width:3.5px;height:11px;background:#0000f0"></div><div class="a" style="left:9.5px;top:20.6px;width:264.7px;height:11px;background:#f0f000"></div><div class="a" style="left:274.2px;top:20.6px;width:1.8px;height:11px;background:#f00000"></div><div class="a" style="left:276.0px;top:20.6px;width:3.6px;height:11px;background:#00d800"></div><div class="a" style="left:6.0px;top:31.6px;width:1px;height:1.5px;background:#d0d0d0"></div><div class="a" style="left:33.3px;top:31.6px;width:1px;height:1.5px;background:#d0d0d0"></div><div class="a" style="left:60.6px;top:31.6px;width:1px;height:1.5px;background:#d0d0d0"></div><div class="a" style="left:87.9px;top:31.6px;width:1px;height:1.5px;background:#d0d0d0"></div><div class="a" style="left:115.2px;top:31.6px;width:1px;height:1.5px;background:#d0d0d0"></div><div class="a" style="left:142.5px;top:31.6px;width:1px;height:1.5px;background:#d0d0d0"></div><div class="a" style="left:169.8px;top:31.6px;width:1px;height:1.5px;background:#d0d0d0"></div><div class="a" style="left:197.1px;top:31.6px;width:1px;height:1.5px;background:#d0d0d0"></div><div class="a" style="left:224.4px;top:31.6px;width:1px;height:1.5px;background:#d0d0d0"></div><div class="a" style="left:251.7px;top:31.6px;width:1px;height:1.5px;background:#d0d0d0"></div><div class="a" style="left:279.0px;top:31.6px;width:1px;height:1.5px;background:#d0d0d0"></div><div class="a mono pre" style="left:7.3px;top:38.9px;font:italic 12px/14px 'Liberation Mono',monospace;transform:scaleY(0.9);transform-origin:0 100%"><span style="color:#111;-webkit-text-stroke:0.5px #111">MEM: </span><span style="color:#0000f0;-webkit-text-stroke:0.5px #0000f0">used</span><span style="color:#111;-webkit-text-stroke:0.5px #111">/</span><span style="color:#f0f000;-webkit-text-stroke:0.5px #f0f000">shar</span><span style="color:#111;-webkit-text-stroke:0.5px #111">/</span><span style="color:#f08800;-webkit-text-stroke:0.5px #f08800">buff</span><span style="color:#111;-webkit-text-stroke:0.5px #111">/</span><span style="color:#f00000;-webkit-text-stroke:0.5px #f00000">cache</span><span style="color:#111;-webkit-text-stroke:0.5px #111">/</span><span style="color:#00e8f0;-webkit-text-stroke:0.5px #00e8f0">activ</span><span style="color:#111;-webkit-text-stroke:0.5px #111">/</span></div><div class="a" style="left:238px;top:37.4px;width:37px;height:13px;background:#000"></div><div class="a mono pre" style="left:241px;top:37.4px;font:italic 12px/14px 'Liberation Mono',monospace;transform:scaleY(0.9);transform-origin:0 100%"><span style="color:#f00000;-webkit-text-stroke:0.5px #f00000">390M</span></div><div class="a" style="left:5px;top:52.0px;width:276px;height:13.5px;background:#111"></div><div class="a" style="left:6.0px;top:53.0px;width:59.7px;height:11px;background:#0000f0"></div><div class="a" style="left:65.7px;top:53.0px;width:13.5px;height:11px;background:#f08800"></div><div class="a" style="left:79.2px;top:53.0px;width:138.4px;height:11px;background:#f00000"></div><div class="a" style="left:217.6px;top:53.0px;width:62.0px;height:11px;background:#00e8f0"></div><div class="a" style="left:6.0px;top:64.0px;width:1px;height:1.5px;background:#d0d0d0"></div><div class="a" style="left:33.3px;top:64.0px;width:1px;height:1.5px;background:#d0d0d0"></div><div class="a" style="left:60.6px;top:64.0px;width:1px;height:1.5px;background:#d0d0d0"></div><div class="a" style="left:87.9px;top:64.0px;width:1px;height:1.5px;background:#d0d0d0"></div><div class="a" style="left:115.2px;top:64.0px;width:1px;height:1.5px;background:#d0d0d0"></div><div class="a" style="left:142.5px;top:64.0px;width:1px;height:1.5px;background:#d0d0d0"></div><div class="a" style="left:169.8px;top:64.0px;width:1px;height:1.5px;background:#d0d0d0"></div><div class="a" style="left:197.1px;top:64.0px;width:1px;height:1.5px;background:#d0d0d0"></div><div class="a" style="left:224.4px;top:64.0px;width:1px;height:1.5px;background:#d0d0d0"></div><div class="a" style="left:251.7px;top:64.0px;width:1px;height:1.5px;background:#d0d0d0"></div><div class="a" style="left:279.0px;top:64.0px;width:1px;height:1.5px;background:#d0d0d0"></div><div class="a mono pre" style="left:7.3px;top:71.3px;font:italic 12px/14px 'Liberation Mono',monospace;transform:scaleY(0.9);transform-origin:0 100%"><span style="color:#111;-webkit-text-stroke:0.5px #111">NET: </span><span style="color:#0000f0;-webkit-text-stroke:0.5px #0000f0">in</span><span style="color:#111;-webkit-text-stroke:0.5px #111">/</span><span style="color:#f00000;-webkit-text-stroke:0.5px #f00000">out</span><span style="color:#111;-webkit-text-stroke:0.5px #111">/</span><span style="color:#00d800;-webkit-text-stroke:0.5px #00d800">idle</span></div><div class="a" style="left:238px;top:69.8px;width:37px;height:13px;background:#000"></div><div class="a mono pre" style="left:241px;top:69.8px;font:italic 12px/14px 'Liberation Mono',monospace;transform:scaleY(0.9);transform-origin:0 100%"><span style="color:#f00000;-webkit-text-stroke:0.5px #f00000">0</span></div><div class="a" style="left:5px;top:84.4px;width:276px;height:13.5px;background:#111"></div><div class="a" style="left:6.0px;top:85.4px;width:273.6px;height:11px;background:#00d800"></div><div class="a" style="left:6.0px;top:96.4px;width:1px;height:1.5px;background:#d0d0d0"></div><div class="a" style="left:33.3px;top:96.4px;width:1px;height:1.5px;background:#d0d0d0"></div><div class="a" style="left:60.6px;top:96.4px;width:1px;height:1.5px;background:#d0d0d0"></div><div class="a" style="left:87.9px;top:96.4px;width:1px;height:1.5px;background:#d0d0d0"></div><div class="a" style="left:115.2px;top:96.4px;width:1px;height:1.5px;background:#d0d0d0"></div><div class="a" style="left:142.5px;top:96.4px;width:1px;height:1.5px;background:#d0d0d0"></div><div class="a" style="left:169.8px;top:96.4px;width:1px;height:1.5px;background:#d0d0d0"></div><div class="a" style="left:197.1px;top:96.4px;width:1px;height:1.5px;background:#d0d0d0"></div><div class="a" style="left:224.4px;top:96.4px;width:1px;height:1.5px;background:#d0d0d0"></div><div class="a" style="left:251.7px;top:96.4px;width:1px;height:1.5px;background:#d0d0d0"></div><div class="a" style="left:279.0px;top:96.4px;width:1px;height:1.5px;background:#d0d0d0"></div><div class="a mono pre" style="left:7.3px;top:103.7px;font:italic 12px/14px 'Liberation Mono',monospace;transform:scaleY(0.9);transform-origin:0 100%"><span style="color:#111;-webkit-text-stroke:0.5px #111">DISK </span><span style="color:#0000f0;-webkit-text-stroke:0.5px #0000f0">READ</span><span style="color:#111;-webkit-text-stroke:0.5px #111">/</span><span style="color:#f0f000;-webkit-text-stroke:0.5px #f0f000">WRITE</span><span style="color:#111;-webkit-text-stroke:0.5px #111">/</span><span style="color:#00d800;-webkit-text-stroke:0.5px #00d800">IDLE</span></div><div class="a" style="left:238px;top:102.2px;width:37px;height:13px;background:#000"></div><div class="a mono pre" style="left:241px;top:102.2px;font:italic 12px/14px 'Liberation Mono',monospace;transform:scaleY(0.9);transform-origin:0 100%"><span style="color:#f00000;-webkit-text-stroke:0.5px #f00000">15K</span></div><div class="a" style="left:5px;top:116.8px;width:276px;height:13.5px;background:#111"></div><div class="a" style="left:6.0px;top:117.8px;width:273.6px;height:11px;background:#00d800"></div><div class="a" style="left:6.0px;top:128.8px;width:1px;height:1.5px;background:#d0d0d0"></div><div class="a" style="left:33.3px;top:128.8px;width:1px;height:1.5px;background:#d0d0d0"></div><div class="a" style="left:60.6px;top:128.8px;width:1px;height:1.5px;background:#d0d0d0"></div><div class="a" style="left:87.9px;top:128.8px;width:1px;height:1.5px;background:#d0d0d0"></div><div class="a" style="left:115.2px;top:128.8px;width:1px;height:1.5px;background:#d0d0d0"></div><div class="a" style="left:142.5px;top:128.8px;width:1px;height:1.5px;background:#d0d0d0"></div><div class="a" style="left:169.8px;top:128.8px;width:1px;height:1.5px;background:#d0d0d0"></div><div class="a" style="left:197.1px;top:128.8px;width:1px;height:1.5px;background:#d0d0d0"></div><div class="a" style="left:224.4px;top:128.8px;width:1px;height:1.5px;background:#d0d0d0"></div><div class="a" style="left:251.7px;top:128.8px;width:1px;height:1.5px;background:#d0d0d0"></div><div class="a" style="left:279.0px;top:128.8px;width:1px;height:1.5px;background:#d0d0d0"></div></div></div></div></div></body></html>
